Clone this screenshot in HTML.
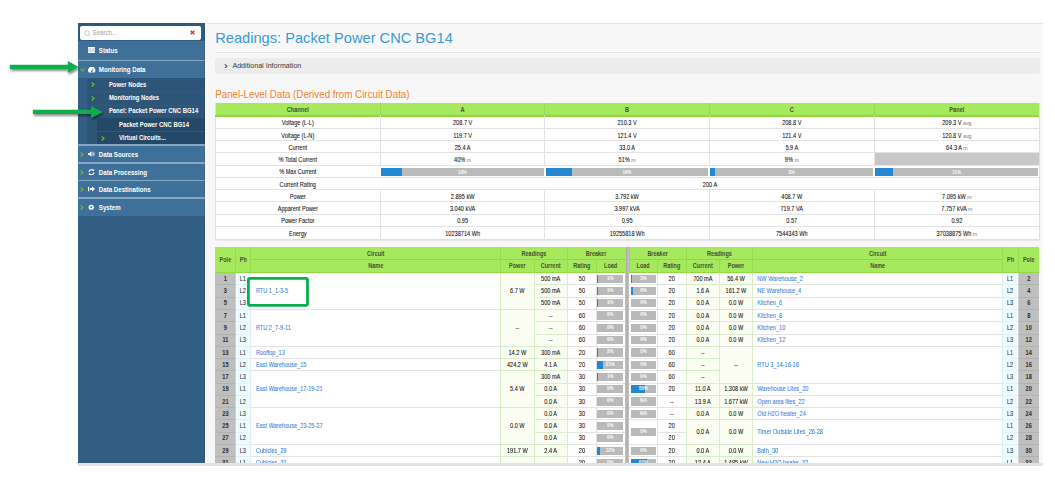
<!DOCTYPE html><html><head><meta charset="utf-8"><style>
html,body{margin:0;padding:0;width:1055px;height:485px;overflow:hidden;background:#fff;font-family:"Liberation Sans",sans-serif;}
div{box-sizing:border-box;-webkit-text-stroke:0.06px currentColor;}
#wrap{position:absolute;left:0;top:0;width:1055px;height:485px;filter:blur(0.25px);}
small{font-size:5.2px;color:#8a8a8a;}
</style></head><body><div id="wrap">
<div style="position:absolute;left:78px;top:23px;width:127px;height:440px;background:#335e83;"></div>
<div style="position:absolute;left:78px;top:23px;width:127px;height:18px;background:#2f5a7f;"></div>
<div style="position:absolute;left:80px;top:26.4px;width:121px;height:13.4px;background:#fff;border-radius:2px;"></div>
<svg style="position:absolute;left:83.5px;top:29.5px" width="7" height="7" viewBox="0 0 7 7"><circle cx="3" cy="3" r="2.3" fill="none" stroke="#aaaaaa" stroke-width="0.6"/><line x1="4.7" y1="4.7" x2="6.5" y2="6.5" stroke="#aaaaaa" stroke-width="0.7"/></svg>
<div style="position:absolute;left:92.6px;top:30.2px;font-size:6.1px;line-height:6.1px;color:#a2a2a2;font-weight:normal;white-space:nowrap;transform:scaleY(1.2);transform-origin:0 50%;-webkit-text-stroke:0;">Search...</div>
<svg style="position:absolute;left:190.3px;top:30.2px" width="5" height="5" viewBox="0 0 5 5"><path d="M0.6 0.6L4.4 4.4M4.4 0.6L0.6 4.4" stroke="#e8141a" stroke-width="1.3"/></svg>
<div style="position:absolute;left:78px;top:41px;width:127px;height:18.5px;background:#3e709a;"></div>
<div style="position:absolute;left:98.8px;top:48.25px;font-size:6.15px;line-height:6.15px;color:#fff;font-weight:bold;white-space:nowrap;transform:scaleY(1.22);transform-origin:0 50%;-webkit-text-stroke:0;">Status</div>
<svg style="position:absolute;left:88.2px;top:47.25px" width="7" height="6" viewBox="0 0 7 6"><rect x="0" y="0" width="7" height="6" fill="#fff"/><rect x="0" y="1.8" width="7" height="0.45" fill="#3e709a"/><rect x="0" y="3.8" width="7" height="0.45" fill="#3e709a"/></svg>
<div style="position:absolute;left:78px;top:59.5px;width:127px;height:1.5px;background:#86a8c4;"></div>
<div style="position:absolute;left:78px;top:61px;width:127px;height:16.900000000000006px;background:#3e709a;"></div>
<div style="position:absolute;left:98.8px;top:67.45px;font-size:6.15px;line-height:6.15px;color:#fff;font-weight:bold;white-space:nowrap;transform:scaleY(1.22);transform-origin:0 50%;-webkit-text-stroke:0;">Monitoring Data</div>
<svg style="position:absolute;left:88.2px;top:66.65px" width="7.4" height="6" viewBox="0 0 7.4 6"><path d="M0.9 5.6A3.6 3.6 0 1 1 6.5 5.6Z" fill="#fff"/><path d="M3.7 4.6L5.2 1.9" stroke="#3e709a" stroke-width="0.8"/><circle cx="3.7" cy="4.6" r="0.8" fill="#3e709a"/></svg>
<svg style="position:absolute;left:79.8px;top:67.95px" width="5" height="4" viewBox="0 0 5 4"><path d="M0.5 0.7L2.5 3L4.5 0.7" fill="none" stroke="#6cc11f" stroke-width="1.1"/></svg>
<div style="position:absolute;left:87px;top:77.9px;width:118px;height:66.1px;background:#2d5577;"></div>
<div style="position:absolute;left:87px;top:90.9px;width:118px;height:0.6px;background:#33597b;"></div>
<div style="position:absolute;left:87px;top:104.5px;width:118px;height:0.6px;background:#33597b;"></div>
<div style="position:absolute;left:108.9px;top:82.5px;font-size:5.92px;line-height:5.92px;color:#fff;font-weight:bold;white-space:nowrap;transform:scaleY(1.22);transform-origin:0 50%;-webkit-text-stroke:0;">Power Nodes</div>
<svg style="position:absolute;left:90.8px;top:82.40px" width="4" height="5" viewBox="0 0 4 5"><path d="M0.7 0.5L3 2.5L0.7 4.5" fill="none" stroke="#6cc11f" stroke-width="1.1"/></svg>
<div style="position:absolute;left:108.9px;top:95.8px;font-size:5.92px;line-height:5.92px;color:#fff;font-weight:bold;white-space:nowrap;transform:scaleY(1.22);transform-origin:0 50%;-webkit-text-stroke:0;">Monitoring Nodes</div>
<svg style="position:absolute;left:90.8px;top:95.70px" width="4" height="5" viewBox="0 0 4 5"><path d="M0.7 0.5L3 2.5L0.7 4.5" fill="none" stroke="#6cc11f" stroke-width="1.1"/></svg>
<div style="position:absolute;left:108.9px;top:109.3px;font-size:5.92px;line-height:5.92px;color:#fff;font-weight:bold;white-space:nowrap;transform:scaleY(1.22);transform-origin:0 50%;-webkit-text-stroke:0;">Panel: Packet Power CNC BG14</div>
<div style="position:absolute;left:97.2px;top:117.9px;width:107.8px;height:26.099999999999994px;background:#244868;"></div>
<div style="position:absolute;left:97.2px;top:131.2px;width:107.8px;height:0.6px;background:#34597a;"></div>
<div style="position:absolute;left:119px;top:122.64999999999999px;font-size:5.92px;line-height:5.92px;color:#fff;font-weight:bold;white-space:nowrap;transform:scaleY(1.22);transform-origin:0 50%;-webkit-text-stroke:0;">Packet Power CNC BG14</div>
<div style="position:absolute;left:119px;top:135.7px;font-size:5.92px;line-height:5.92px;color:#fff;font-weight:bold;white-space:nowrap;transform:scaleY(1.22);transform-origin:0 50%;-webkit-text-stroke:0;">Virtual Circuits...</div>
<svg style="position:absolute;left:101px;top:135.60px" width="4" height="5" viewBox="0 0 4 5"><path d="M0.7 0.5L3 2.5L0.7 4.5" fill="none" stroke="#6cc11f" stroke-width="1.1"/></svg>
<div style="position:absolute;left:78px;top:144px;width:127px;height:1.5px;background:#86a8c4;"></div>
<div style="position:absolute;left:78px;top:145.5px;width:127px;height:16.5px;background:#3e709a;"></div>
<div style="position:absolute;left:98.8px;top:151.75px;font-size:6.15px;line-height:6.15px;color:#fff;font-weight:bold;white-space:nowrap;transform:scaleY(1.22);transform-origin:0 50%;-webkit-text-stroke:0;">Data Sources</div>
<svg style="position:absolute;left:88.2px;top:150.75px" width="7" height="6" viewBox="0 0 7 6"><path d="M0 2H1.5L3.5 0.3V5.7L1.5 4H0Z" fill="#fff"/><path d="M4.5 1.5Q5.6 3 4.5 4.5M5.5 0.7Q7 3 5.5 5.3" fill="none" stroke="#fff" stroke-width="0.7"/></svg>
<svg style="position:absolute;left:80.3px;top:151.75px" width="4" height="5" viewBox="0 0 4 5"><path d="M0.7 0.5L3 2.5L0.7 4.5" fill="none" stroke="#6cc11f" stroke-width="1.1"/></svg>
<div style="position:absolute;left:78px;top:162px;width:127px;height:1.5px;background:#86a8c4;"></div>
<div style="position:absolute;left:78px;top:163.5px;width:127px;height:16.0px;background:#3e709a;"></div>
<div style="position:absolute;left:98.8px;top:169.5px;font-size:6.15px;line-height:6.15px;color:#fff;font-weight:bold;white-space:nowrap;transform:scaleY(1.22);transform-origin:0 50%;-webkit-text-stroke:0;">Data Processing</div>
<svg style="position:absolute;left:88.2px;top:168.50px" width="7" height="6.5" viewBox="0 0 7 6.5"><path d="M1 3A2.5 2.5 0 0 1 5.5 1.8M6 3.5A2.5 2.5 0 0 1 1.5 4.7" fill="none" stroke="#fff" stroke-width="1.2"/><path d="M4.2 0.3L6.3 0.5L6 2.6Z M2.8 6.2L0.7 6L1 3.9Z" fill="#fff"/></svg>
<svg style="position:absolute;left:80.3px;top:169.50px" width="4" height="5" viewBox="0 0 4 5"><path d="M0.7 0.5L3 2.5L0.7 4.5" fill="none" stroke="#6cc11f" stroke-width="1.1"/></svg>
<div style="position:absolute;left:78px;top:179.5px;width:127px;height:1.5px;background:#86a8c4;"></div>
<div style="position:absolute;left:78px;top:181px;width:127px;height:16px;background:#3e709a;"></div>
<div style="position:absolute;left:98.8px;top:187.0px;font-size:6.15px;line-height:6.15px;color:#fff;font-weight:bold;white-space:nowrap;transform:scaleY(1.22);transform-origin:0 50%;-webkit-text-stroke:0;">Data Destinations</div>
<svg style="position:absolute;left:88.2px;top:186.00px" width="7" height="6" viewBox="0 0 7 6"><path d="M0 0.8H1.2V5.2H0Z" fill="#fff"/><path d="M2 2H4V0.3L7 3L4 5.7V4H2Z" fill="#fff"/></svg>
<svg style="position:absolute;left:80.3px;top:187.00px" width="4" height="5" viewBox="0 0 4 5"><path d="M0.7 0.5L3 2.5L0.7 4.5" fill="none" stroke="#6cc11f" stroke-width="1.1"/></svg>
<div style="position:absolute;left:78px;top:197px;width:127px;height:1.5px;background:#86a8c4;"></div>
<div style="position:absolute;left:78px;top:198.5px;width:127px;height:17.30000000000001px;background:#3e709a;"></div>
<div style="position:absolute;left:98.8px;top:205.15px;font-size:6.15px;line-height:6.15px;color:#fff;font-weight:bold;white-space:nowrap;transform:scaleY(1.22);transform-origin:0 50%;-webkit-text-stroke:0;">System</div>
<svg style="position:absolute;left:88.2px;top:203.95px" width="6.5" height="6.5" viewBox="0 0 6.5 6.5"><circle cx="3.25" cy="3.25" r="2.6" fill="#fff"/><circle cx="3.25" cy="3.25" r="1.1" fill="#3e709a"/></svg>
<svg style="position:absolute;left:80.3px;top:205.15px" width="4" height="5" viewBox="0 0 4 5"><path d="M0.7 0.5L3 2.5L0.7 4.5" fill="none" stroke="#6cc11f" stroke-width="1.1"/></svg>
<div style="position:absolute;left:203.6px;top:23px;width:1.4px;height:440px;background:rgba(0,0,0,0.09);"></div>
<div style="position:absolute;left:206px;top:23px;width:836.5px;height:440px;background:#f7f7f7;"></div>
<div style="position:absolute;left:206px;top:23px;width:836.5px;height:1.3px;background:#e4e4e4;"></div>
<div style="position:absolute;left:78px;top:463px;width:965px;height:2.8px;background:#e3e3e3;"></div>
<div style="position:absolute;left:215.2px;top:31.0px;font-size:14.65px;line-height:14.65px;color:#3a9ad8;font-weight:normal;white-space:nowrap;transform:scaleY(1.06);transform-origin:0 50%;-webkit-text-stroke:0;">Readings: Packet Power CNC BG14</div>
<div style="position:absolute;left:215px;top:51.5px;width:825px;height:1px;background:#e2e2e2;"></div>
<div style="position:absolute;left:215.2px;top:57.5px;width:824.5px;height:16.7px;background:#ececec;border-radius:2px;"></div>
<svg style="position:absolute;left:224.2px;top:63.5px" width="4" height="4.5" viewBox="0 0 4 4.5"><path d="M0.8 0.4L3 2.25L0.8 4.1" fill="none" stroke="#555" stroke-width="1.1"/></svg>
<div style="position:absolute;left:232.4px;top:62.6px;font-size:7.14px;line-height:7.14px;color:#3a3a3a;font-weight:normal;white-space:nowrap;transform:scaleY(1.1);transform-origin:0 50%;-webkit-text-stroke:0;">Additional Information</div>
<div style="position:absolute;left:215.2px;top:90.0px;font-size:9.8px;line-height:9.8px;color:#ef8333;font-weight:normal;white-space:nowrap;transform:scaleY(1.08);transform-origin:0 50%;-webkit-text-stroke:0;">Panel-Level Data (Derived from Circuit Data)</div>
<div style="position:absolute;left:215.10px;top:103.20px;width:824.40px;height:135.60px;background:#fff;"></div>
<div style="position:absolute;left:215.10px;top:103.20px;width:824.40px;height:12.80px;background:#a7e95c;"></div>
<div style="position:absolute;left:215.10px;top:103.20px;width:165.40px;height:11.20px;"><div style="position:absolute;left:0px;right:0px;top:4.68px;font-size:5.65px;line-height:5.65px;color:#465036;font-weight:bold;text-align:center;white-space:nowrap;transform:scaleY(1.15);-webkit-text-stroke:0;">Channel</div></div>
<div style="position:absolute;left:380.50px;top:103.20px;width:164.30px;height:11.20px;"><div style="position:absolute;left:0px;right:0px;top:4.68px;font-size:5.65px;line-height:5.65px;color:#465036;font-weight:bold;text-align:center;white-space:nowrap;transform:scaleY(1.15);-webkit-text-stroke:0;">A</div></div>
<div style="position:absolute;left:544.80px;top:103.20px;width:164.60px;height:11.20px;"><div style="position:absolute;left:0px;right:0px;top:4.68px;font-size:5.65px;line-height:5.65px;color:#465036;font-weight:bold;text-align:center;white-space:nowrap;transform:scaleY(1.15);-webkit-text-stroke:0;">B</div></div>
<div style="position:absolute;left:709.40px;top:103.20px;width:164.80px;height:11.20px;"><div style="position:absolute;left:0px;right:0px;top:4.68px;font-size:5.65px;line-height:5.65px;color:#465036;font-weight:bold;text-align:center;white-space:nowrap;transform:scaleY(1.15);-webkit-text-stroke:0;">C</div></div>
<div style="position:absolute;left:874.20px;top:103.20px;width:165.30px;height:11.20px;"><div style="position:absolute;left:0px;right:0px;top:4.68px;font-size:5.65px;line-height:5.65px;color:#465036;font-weight:bold;text-align:center;white-space:nowrap;transform:scaleY(1.15);-webkit-text-stroke:0;">Panel</div></div>
<div style="position:absolute;left:215.10px;top:116.00px;width:165.40px;height:12.28px;"><div style="position:absolute;left:0px;right:0px;top:5.24px;font-size:5.6px;line-height:5.6px;color:#111;font-weight:normal;text-align:center;white-space:nowrap;transform:scaleY(1.15);">Voltage (L-L)</div></div>
<div style="position:absolute;left:380.50px;top:116.00px;width:164.30px;height:12.28px;"><div style="position:absolute;left:0px;right:0px;top:5.24px;font-size:5.6px;line-height:5.6px;color:#111;font-weight:normal;text-align:center;white-space:nowrap;transform:scaleY(1.15);">208.7 V</div></div>
<div style="position:absolute;left:544.80px;top:116.00px;width:164.60px;height:12.28px;"><div style="position:absolute;left:0px;right:0px;top:5.24px;font-size:5.6px;line-height:5.6px;color:#111;font-weight:normal;text-align:center;white-space:nowrap;transform:scaleY(1.15);">210.3 V</div></div>
<div style="position:absolute;left:709.40px;top:116.00px;width:164.80px;height:12.28px;"><div style="position:absolute;left:0px;right:0px;top:5.24px;font-size:5.6px;line-height:5.6px;color:#111;font-weight:normal;text-align:center;white-space:nowrap;transform:scaleY(1.15);">208.8 V</div></div>
<div style="position:absolute;left:874.20px;top:116.00px;width:165.30px;height:12.28px;"><div style="position:absolute;left:0px;right:0px;top:5.24px;font-size:5.6px;line-height:5.6px;color:#111;font-weight:normal;text-align:center;white-space:nowrap;transform:scaleY(1.15);">209.3 V <small>avg</small></div></div>
<div style="position:absolute;left:215.10px;top:128.28px;width:165.40px;height:12.28px;"><div style="position:absolute;left:0px;right:0px;top:5.24px;font-size:5.6px;line-height:5.6px;color:#111;font-weight:normal;text-align:center;white-space:nowrap;transform:scaleY(1.15);">Voltage (L-N)</div></div>
<div style="position:absolute;left:380.50px;top:128.28px;width:164.30px;height:12.28px;"><div style="position:absolute;left:0px;right:0px;top:5.24px;font-size:5.6px;line-height:5.6px;color:#111;font-weight:normal;text-align:center;white-space:nowrap;transform:scaleY(1.15);">119.7 V</div></div>
<div style="position:absolute;left:544.80px;top:128.28px;width:164.60px;height:12.28px;"><div style="position:absolute;left:0px;right:0px;top:5.24px;font-size:5.6px;line-height:5.6px;color:#111;font-weight:normal;text-align:center;white-space:nowrap;transform:scaleY(1.15);">121.4 V</div></div>
<div style="position:absolute;left:709.40px;top:128.28px;width:164.80px;height:12.28px;"><div style="position:absolute;left:0px;right:0px;top:5.24px;font-size:5.6px;line-height:5.6px;color:#111;font-weight:normal;text-align:center;white-space:nowrap;transform:scaleY(1.15);">121.4 V</div></div>
<div style="position:absolute;left:874.20px;top:128.28px;width:165.30px;height:12.28px;"><div style="position:absolute;left:0px;right:0px;top:5.24px;font-size:5.6px;line-height:5.6px;color:#111;font-weight:normal;text-align:center;white-space:nowrap;transform:scaleY(1.15);">120.8 V <small>avg</small></div></div>
<div style="position:absolute;left:215.10px;top:140.56px;width:165.40px;height:12.28px;"><div style="position:absolute;left:0px;right:0px;top:5.24px;font-size:5.6px;line-height:5.6px;color:#111;font-weight:normal;text-align:center;white-space:nowrap;transform:scaleY(1.15);">Current</div></div>
<div style="position:absolute;left:380.50px;top:140.56px;width:164.30px;height:12.28px;"><div style="position:absolute;left:0px;right:0px;top:5.24px;font-size:5.6px;line-height:5.6px;color:#111;font-weight:normal;text-align:center;white-space:nowrap;transform:scaleY(1.15);">25.4 A</div></div>
<div style="position:absolute;left:544.80px;top:140.56px;width:164.60px;height:12.28px;"><div style="position:absolute;left:0px;right:0px;top:5.24px;font-size:5.6px;line-height:5.6px;color:#111;font-weight:normal;text-align:center;white-space:nowrap;transform:scaleY(1.15);">33.0 A</div></div>
<div style="position:absolute;left:709.40px;top:140.56px;width:164.80px;height:12.28px;"><div style="position:absolute;left:0px;right:0px;top:5.24px;font-size:5.6px;line-height:5.6px;color:#111;font-weight:normal;text-align:center;white-space:nowrap;transform:scaleY(1.15);">5.9 A</div></div>
<div style="position:absolute;left:874.20px;top:140.56px;width:165.30px;height:12.28px;"><div style="position:absolute;left:0px;right:0px;top:5.24px;font-size:5.6px;line-height:5.6px;color:#111;font-weight:normal;text-align:center;white-space:nowrap;transform:scaleY(1.15);">64.3 A <small>m</small></div></div>
<div style="position:absolute;left:215.10px;top:152.84px;width:165.40px;height:12.28px;"><div style="position:absolute;left:0px;right:0px;top:5.24px;font-size:5.6px;line-height:5.6px;color:#111;font-weight:normal;text-align:center;white-space:nowrap;transform:scaleY(1.15);">% Total Current</div></div>
<div style="position:absolute;left:380.50px;top:152.84px;width:164.30px;height:12.28px;"><div style="position:absolute;left:0px;right:0px;top:5.24px;font-size:5.6px;line-height:5.6px;color:#111;font-weight:normal;text-align:center;white-space:nowrap;transform:scaleY(1.15);">40% <small>m</small></div></div>
<div style="position:absolute;left:544.80px;top:152.84px;width:164.60px;height:12.28px;"><div style="position:absolute;left:0px;right:0px;top:5.24px;font-size:5.6px;line-height:5.6px;color:#111;font-weight:normal;text-align:center;white-space:nowrap;transform:scaleY(1.15);">51% <small>m</small></div></div>
<div style="position:absolute;left:709.40px;top:152.84px;width:164.80px;height:12.28px;"><div style="position:absolute;left:0px;right:0px;top:5.24px;font-size:5.6px;line-height:5.6px;color:#111;font-weight:normal;text-align:center;white-space:nowrap;transform:scaleY(1.15);">9% <small>m</small></div></div>
<div style="position:absolute;left:874.70px;top:153.34px;width:164.80px;height:11.28px;background:#c8c8c8;"></div>
<div style="position:absolute;left:215.10px;top:165.12px;width:165.40px;height:12.28px;"><div style="position:absolute;left:0px;right:0px;top:5.24px;font-size:5.6px;line-height:5.6px;color:#111;font-weight:normal;text-align:center;white-space:nowrap;transform:scaleY(1.15);">% Max Current</div></div>
<div style="position:absolute;left:381.20px;top:167.52px;width:162.40px;height:8.18px;background:#bababa;"></div>
<div style="position:absolute;left:381.20px;top:167.52px;width:21.00px;height:8.18px;background:#2288d2;"></div>
<div style="position:absolute;left:381.20px;top:166.72px;width:162.40px;height:8.18px;"><div style="position:absolute;left:0px;right:0px;top:3.79px;font-size:4.4px;line-height:4.4px;color:#f6f6f6;font-weight:bold;text-align:center;white-space:nowrap;transform:scaleY(1.1);">12%</div></div>
<div style="position:absolute;left:545.50px;top:167.52px;width:162.70px;height:8.18px;background:#bababa;"></div>
<div style="position:absolute;left:545.50px;top:167.52px;width:26.00px;height:8.18px;background:#2288d2;"></div>
<div style="position:absolute;left:545.50px;top:166.72px;width:162.70px;height:8.18px;"><div style="position:absolute;left:0px;right:0px;top:3.79px;font-size:4.4px;line-height:4.4px;color:#f6f6f6;font-weight:bold;text-align:center;white-space:nowrap;transform:scaleY(1.1);">16%</div></div>
<div style="position:absolute;left:710.10px;top:167.52px;width:162.90px;height:8.18px;background:#bababa;"></div>
<div style="position:absolute;left:710.10px;top:167.52px;width:5.00px;height:8.18px;background:#2288d2;"></div>
<div style="position:absolute;left:710.10px;top:166.72px;width:162.90px;height:8.18px;"><div style="position:absolute;left:0px;right:0px;top:3.79px;font-size:4.4px;line-height:4.4px;color:#f6f6f6;font-weight:bold;text-align:center;white-space:nowrap;transform:scaleY(1.1);">3%</div></div>
<div style="position:absolute;left:874.90px;top:167.52px;width:163.40px;height:8.18px;background:#bababa;"></div>
<div style="position:absolute;left:874.90px;top:167.52px;width:18.00px;height:8.18px;background:#2288d2;"></div>
<div style="position:absolute;left:874.90px;top:166.72px;width:163.40px;height:8.18px;"><div style="position:absolute;left:0px;right:0px;top:3.79px;font-size:4.4px;line-height:4.4px;color:#f6f6f6;font-weight:bold;text-align:center;white-space:nowrap;transform:scaleY(1.1);">11%</div></div>
<div style="position:absolute;left:215.10px;top:177.40px;width:165.40px;height:12.28px;"><div style="position:absolute;left:0px;right:0px;top:5.24px;font-size:5.6px;line-height:5.6px;color:#111;font-weight:normal;text-align:center;white-space:nowrap;transform:scaleY(1.15);">Current Rating</div></div>
<div style="position:absolute;left:380.50px;top:177.40px;width:659.00px;height:12.28px;"><div style="position:absolute;left:0px;right:0px;top:5.24px;font-size:5.6px;line-height:5.6px;color:#111;font-weight:normal;text-align:center;white-space:nowrap;transform:scaleY(1.15);">200 A</div></div>
<div style="position:absolute;left:215.10px;top:189.68px;width:165.40px;height:12.28px;"><div style="position:absolute;left:0px;right:0px;top:5.24px;font-size:5.6px;line-height:5.6px;color:#111;font-weight:normal;text-align:center;white-space:nowrap;transform:scaleY(1.15);">Power</div></div>
<div style="position:absolute;left:380.50px;top:189.68px;width:164.30px;height:12.28px;"><div style="position:absolute;left:0px;right:0px;top:5.24px;font-size:5.6px;line-height:5.6px;color:#111;font-weight:normal;text-align:center;white-space:nowrap;transform:scaleY(1.15);">2.895 kW</div></div>
<div style="position:absolute;left:544.80px;top:189.68px;width:164.60px;height:12.28px;"><div style="position:absolute;left:0px;right:0px;top:5.24px;font-size:5.6px;line-height:5.6px;color:#111;font-weight:normal;text-align:center;white-space:nowrap;transform:scaleY(1.15);">3.792 kW</div></div>
<div style="position:absolute;left:709.40px;top:189.68px;width:164.80px;height:12.28px;"><div style="position:absolute;left:0px;right:0px;top:5.24px;font-size:5.6px;line-height:5.6px;color:#111;font-weight:normal;text-align:center;white-space:nowrap;transform:scaleY(1.15);">408.7 W</div></div>
<div style="position:absolute;left:874.20px;top:189.68px;width:165.30px;height:12.28px;"><div style="position:absolute;left:0px;right:0px;top:5.24px;font-size:5.6px;line-height:5.6px;color:#111;font-weight:normal;text-align:center;white-space:nowrap;transform:scaleY(1.15);">7.095 kW <small>m</small></div></div>
<div style="position:absolute;left:215.10px;top:201.96px;width:165.40px;height:12.28px;"><div style="position:absolute;left:0px;right:0px;top:5.24px;font-size:5.6px;line-height:5.6px;color:#111;font-weight:normal;text-align:center;white-space:nowrap;transform:scaleY(1.15);">Apparent Power</div></div>
<div style="position:absolute;left:380.50px;top:201.96px;width:164.30px;height:12.28px;"><div style="position:absolute;left:0px;right:0px;top:5.24px;font-size:5.6px;line-height:5.6px;color:#111;font-weight:normal;text-align:center;white-space:nowrap;transform:scaleY(1.15);">3.040 kVA</div></div>
<div style="position:absolute;left:544.80px;top:201.96px;width:164.60px;height:12.28px;"><div style="position:absolute;left:0px;right:0px;top:5.24px;font-size:5.6px;line-height:5.6px;color:#111;font-weight:normal;text-align:center;white-space:nowrap;transform:scaleY(1.15);">3.997 kVA</div></div>
<div style="position:absolute;left:709.40px;top:201.96px;width:164.80px;height:12.28px;"><div style="position:absolute;left:0px;right:0px;top:5.24px;font-size:5.6px;line-height:5.6px;color:#111;font-weight:normal;text-align:center;white-space:nowrap;transform:scaleY(1.15);">719.7 VA</div></div>
<div style="position:absolute;left:874.20px;top:201.96px;width:165.30px;height:12.28px;"><div style="position:absolute;left:0px;right:0px;top:5.24px;font-size:5.6px;line-height:5.6px;color:#111;font-weight:normal;text-align:center;white-space:nowrap;transform:scaleY(1.15);">7.757 kVA <small>m</small></div></div>
<div style="position:absolute;left:215.10px;top:214.24px;width:165.40px;height:12.28px;"><div style="position:absolute;left:0px;right:0px;top:5.24px;font-size:5.6px;line-height:5.6px;color:#111;font-weight:normal;text-align:center;white-space:nowrap;transform:scaleY(1.15);">Power Factor</div></div>
<div style="position:absolute;left:380.50px;top:214.24px;width:164.30px;height:12.28px;"><div style="position:absolute;left:0px;right:0px;top:5.24px;font-size:5.6px;line-height:5.6px;color:#111;font-weight:normal;text-align:center;white-space:nowrap;transform:scaleY(1.15);">0.95</div></div>
<div style="position:absolute;left:544.80px;top:214.24px;width:164.60px;height:12.28px;"><div style="position:absolute;left:0px;right:0px;top:5.24px;font-size:5.6px;line-height:5.6px;color:#111;font-weight:normal;text-align:center;white-space:nowrap;transform:scaleY(1.15);">0.95</div></div>
<div style="position:absolute;left:709.40px;top:214.24px;width:164.80px;height:12.28px;"><div style="position:absolute;left:0px;right:0px;top:5.24px;font-size:5.6px;line-height:5.6px;color:#111;font-weight:normal;text-align:center;white-space:nowrap;transform:scaleY(1.15);">0.57</div></div>
<div style="position:absolute;left:874.20px;top:214.24px;width:165.30px;height:12.28px;"><div style="position:absolute;left:0px;right:0px;top:5.24px;font-size:5.6px;line-height:5.6px;color:#111;font-weight:normal;text-align:center;white-space:nowrap;transform:scaleY(1.15);">0.92</div></div>
<div style="position:absolute;left:215.10px;top:226.52px;width:165.40px;height:12.28px;"><div style="position:absolute;left:0px;right:0px;top:5.24px;font-size:5.6px;line-height:5.6px;color:#111;font-weight:normal;text-align:center;white-space:nowrap;transform:scaleY(1.15);">Energy</div></div>
<div style="position:absolute;left:380.50px;top:226.52px;width:164.30px;height:12.28px;"><div style="position:absolute;left:0px;right:0px;top:5.24px;font-size:5.6px;line-height:5.6px;color:#111;font-weight:normal;text-align:center;white-space:nowrap;transform:scaleY(1.15);">10238714 Wh</div></div>
<div style="position:absolute;left:544.80px;top:226.52px;width:164.60px;height:12.28px;"><div style="position:absolute;left:0px;right:0px;top:5.24px;font-size:5.6px;line-height:5.6px;color:#111;font-weight:normal;text-align:center;white-space:nowrap;transform:scaleY(1.15);">19255818 Wh</div></div>
<div style="position:absolute;left:709.40px;top:226.52px;width:164.80px;height:12.28px;"><div style="position:absolute;left:0px;right:0px;top:5.24px;font-size:5.6px;line-height:5.6px;color:#111;font-weight:normal;text-align:center;white-space:nowrap;transform:scaleY(1.15);">7544343 Wh</div></div>
<div style="position:absolute;left:874.20px;top:226.52px;width:165.30px;height:12.28px;"><div style="position:absolute;left:0px;right:0px;top:5.24px;font-size:5.6px;line-height:5.6px;color:#111;font-weight:normal;text-align:center;white-space:nowrap;transform:scaleY(1.15);">37038875 Wh <small>m</small></div></div>
<div style="position:absolute;left:214.50px;top:103.20px;width:825.60px;height:136.40px;border:0.8px solid #e0e0e0;border-top:none;box-sizing:border-box;box-shadow:0 0.5px 1px rgba(0,0,0,0.06)"></div>
<div style="position:absolute;left:215.10px;top:247.30px;width:823.90px;height:215.70px;background:#fff;"></div>
<div style="position:absolute;left:215.10px;top:247.30px;width:823.90px;height:25.30px;background:#a7e95c;"></div>
<div style="position:absolute;left:215.10px;top:247.80px;width:20.60px;height:23.70px;"><div style="position:absolute;left:0px;right:0px;top:10.00px;font-size:5.5px;line-height:5.5px;color:#465036;font-weight:bold;text-align:center;white-space:nowrap;transform:scaleY(1.15);-webkit-text-stroke:0;">Pole</div></div>
<div style="position:absolute;left:235.70px;top:247.80px;width:15.20px;height:23.70px;"><div style="position:absolute;left:0px;right:0px;top:10.00px;font-size:5.5px;line-height:5.5px;color:#465036;font-weight:bold;text-align:center;white-space:nowrap;transform:scaleY(1.15);-webkit-text-stroke:0;">Ph</div></div>
<div style="position:absolute;left:250.90px;top:247.30px;width:249.70px;height:12.20px;"><div style="position:absolute;left:0px;right:0px;top:4.25px;font-size:5.5px;line-height:5.5px;color:#465036;font-weight:bold;text-align:center;white-space:nowrap;transform:scaleY(1.15);-webkit-text-stroke:0;">Circuit</div></div>
<div style="position:absolute;left:250.90px;top:260.50px;width:249.70px;height:11.50px;"><div style="position:absolute;left:0px;right:0px;top:3.90px;font-size:5.5px;line-height:5.5px;color:#465036;font-weight:bold;text-align:center;white-space:nowrap;transform:scaleY(1.15);-webkit-text-stroke:0;">Name</div></div>
<div style="position:absolute;left:500.60px;top:247.30px;width:66.70px;height:12.20px;"><div style="position:absolute;left:0px;right:0px;top:4.25px;font-size:5.5px;line-height:5.5px;color:#465036;font-weight:bold;text-align:center;white-space:nowrap;transform:scaleY(1.15);-webkit-text-stroke:0;">Readings</div></div>
<div style="position:absolute;left:500.60px;top:260.50px;width:33.50px;height:11.50px;"><div style="position:absolute;left:0px;right:0px;top:3.90px;font-size:5.5px;line-height:5.5px;color:#465036;font-weight:bold;text-align:center;white-space:nowrap;transform:scaleY(1.15);-webkit-text-stroke:0;">Power</div></div>
<div style="position:absolute;left:534.10px;top:260.50px;width:33.20px;height:11.50px;"><div style="position:absolute;left:0px;right:0px;top:3.90px;font-size:5.5px;line-height:5.5px;color:#465036;font-weight:bold;text-align:center;white-space:nowrap;transform:scaleY(1.15);-webkit-text-stroke:0;">Current</div></div>
<div style="position:absolute;left:567.30px;top:247.30px;width:57.50px;height:12.20px;"><div style="position:absolute;left:0px;right:0px;top:4.25px;font-size:5.5px;line-height:5.5px;color:#465036;font-weight:bold;text-align:center;white-space:nowrap;transform:scaleY(1.15);-webkit-text-stroke:0;">Breaker</div></div>
<div style="position:absolute;left:567.30px;top:260.50px;width:29.20px;height:11.50px;"><div style="position:absolute;left:0px;right:0px;top:3.90px;font-size:5.5px;line-height:5.5px;color:#465036;font-weight:bold;text-align:center;white-space:nowrap;transform:scaleY(1.15);-webkit-text-stroke:0;">Rating</div></div>
<div style="position:absolute;left:596.50px;top:260.50px;width:28.30px;height:11.50px;"><div style="position:absolute;left:0px;right:0px;top:3.90px;font-size:5.5px;line-height:5.5px;color:#465036;font-weight:bold;text-align:center;white-space:nowrap;transform:scaleY(1.15);-webkit-text-stroke:0;">Load</div></div>
<div style="position:absolute;left:629.00px;top:247.30px;width:57.30px;height:12.20px;"><div style="position:absolute;left:0px;right:0px;top:4.25px;font-size:5.5px;line-height:5.5px;color:#465036;font-weight:bold;text-align:center;white-space:nowrap;transform:scaleY(1.15);-webkit-text-stroke:0;">Breaker</div></div>
<div style="position:absolute;left:629.00px;top:260.50px;width:28.20px;height:11.50px;"><div style="position:absolute;left:0px;right:0px;top:3.90px;font-size:5.5px;line-height:5.5px;color:#465036;font-weight:bold;text-align:center;white-space:nowrap;transform:scaleY(1.15);-webkit-text-stroke:0;">Load</div></div>
<div style="position:absolute;left:657.20px;top:260.50px;width:29.10px;height:11.50px;"><div style="position:absolute;left:0px;right:0px;top:3.90px;font-size:5.5px;line-height:5.5px;color:#465036;font-weight:bold;text-align:center;white-space:nowrap;transform:scaleY(1.15);-webkit-text-stroke:0;">Rating</div></div>
<div style="position:absolute;left:686.30px;top:247.30px;width:66.40px;height:12.20px;"><div style="position:absolute;left:0px;right:0px;top:4.25px;font-size:5.5px;line-height:5.5px;color:#465036;font-weight:bold;text-align:center;white-space:nowrap;transform:scaleY(1.15);-webkit-text-stroke:0;">Readings</div></div>
<div style="position:absolute;left:686.30px;top:260.50px;width:33.00px;height:11.50px;"><div style="position:absolute;left:0px;right:0px;top:3.90px;font-size:5.5px;line-height:5.5px;color:#465036;font-weight:bold;text-align:center;white-space:nowrap;transform:scaleY(1.15);-webkit-text-stroke:0;">Current</div></div>
<div style="position:absolute;left:719.30px;top:260.50px;width:33.40px;height:11.50px;"><div style="position:absolute;left:0px;right:0px;top:3.90px;font-size:5.5px;line-height:5.5px;color:#465036;font-weight:bold;text-align:center;white-space:nowrap;transform:scaleY(1.15);-webkit-text-stroke:0;">Power</div></div>
<div style="position:absolute;left:752.70px;top:247.30px;width:250.00px;height:12.20px;"><div style="position:absolute;left:0px;right:0px;top:4.25px;font-size:5.5px;line-height:5.5px;color:#465036;font-weight:bold;text-align:center;white-space:nowrap;transform:scaleY(1.15);-webkit-text-stroke:0;">Circuit</div></div>
<div style="position:absolute;left:752.70px;top:260.50px;width:250.00px;height:11.50px;"><div style="position:absolute;left:0px;right:0px;top:3.90px;font-size:5.5px;line-height:5.5px;color:#465036;font-weight:bold;text-align:center;white-space:nowrap;transform:scaleY(1.15);-webkit-text-stroke:0;">Name</div></div>
<div style="position:absolute;left:1002.70px;top:247.80px;width:15.70px;height:23.70px;"><div style="position:absolute;left:0px;right:0px;top:10.00px;font-size:5.5px;line-height:5.5px;color:#465036;font-weight:bold;text-align:center;white-space:nowrap;transform:scaleY(1.15);-webkit-text-stroke:0;">Ph</div></div>
<div style="position:absolute;left:1018.40px;top:247.80px;width:20.60px;height:23.70px;"><div style="position:absolute;left:0px;right:0px;top:10.00px;font-size:5.5px;line-height:5.5px;color:#465036;font-weight:bold;text-align:center;white-space:nowrap;transform:scaleY(1.15);-webkit-text-stroke:0;">Pole</div></div>
<div style="position:absolute;left:624.80px;top:247.30px;width:4.20px;height:215.70px;background:#c2c2c2;"></div>
<div style="position:absolute;left:626.00px;top:247.30px;width:1.80px;height:215.70px;background:#b3b3b3;"></div>
<div style="position:absolute;left:215.10px;top:272.60px;width:20.60px;height:12.28px;background:#bfbfbf;"></div>
<div style="position:absolute;left:235.70px;top:272.60px;width:15.20px;height:12.28px;background:#eefbff;"></div>
<div style="position:absolute;left:1018.40px;top:272.60px;width:20.60px;height:12.28px;background:#bfbfbf;"></div>
<div style="position:absolute;left:1002.70px;top:272.60px;width:15.70px;height:12.28px;background:#eefbff;"></div>
<div style="position:absolute;left:215.10px;top:272.60px;width:20.60px;height:12.28px;"><div style="position:absolute;left:0px;right:0px;top:4.24px;font-size:5.6px;line-height:5.6px;color:#333;font-weight:bold;text-align:center;white-space:nowrap;transform:scaleY(1.15);">1</div></div>
<div style="position:absolute;left:235.70px;top:272.60px;width:15.20px;height:12.28px;"><div style="position:absolute;left:4.0px;right:4.0px;top:4.24px;font-size:5.6px;line-height:5.6px;color:#333;font-weight:normal;text-align:left;white-space:nowrap;transform:scaleY(1.15);">L1</div></div>
<div style="position:absolute;left:1018.40px;top:272.60px;width:20.60px;height:12.28px;"><div style="position:absolute;left:0px;right:0px;top:4.24px;font-size:5.6px;line-height:5.6px;color:#333;font-weight:bold;text-align:center;white-space:nowrap;transform:scaleY(1.15);">2</div></div>
<div style="position:absolute;left:1002.70px;top:272.60px;width:15.70px;height:12.28px;"><div style="position:absolute;left:4.3px;right:4.3px;top:4.24px;font-size:5.6px;line-height:5.6px;color:#333;font-weight:normal;text-align:left;white-space:nowrap;transform:scaleY(1.15);">L1</div></div>
<div style="position:absolute;left:215.10px;top:284.88px;width:20.60px;height:12.28px;background:#bfbfbf;"></div>
<div style="position:absolute;left:235.70px;top:284.88px;width:15.20px;height:12.28px;background:#eefbff;"></div>
<div style="position:absolute;left:1018.40px;top:284.88px;width:20.60px;height:12.28px;background:#bfbfbf;"></div>
<div style="position:absolute;left:1002.70px;top:284.88px;width:15.70px;height:12.28px;background:#eefbff;"></div>
<div style="position:absolute;left:215.10px;top:284.88px;width:20.60px;height:12.28px;"><div style="position:absolute;left:0px;right:0px;top:4.24px;font-size:5.6px;line-height:5.6px;color:#333;font-weight:bold;text-align:center;white-space:nowrap;transform:scaleY(1.15);">3</div></div>
<div style="position:absolute;left:235.70px;top:284.88px;width:15.20px;height:12.28px;"><div style="position:absolute;left:4.0px;right:4.0px;top:4.24px;font-size:5.6px;line-height:5.6px;color:#333;font-weight:normal;text-align:left;white-space:nowrap;transform:scaleY(1.15);">L2</div></div>
<div style="position:absolute;left:1018.40px;top:284.88px;width:20.60px;height:12.28px;"><div style="position:absolute;left:0px;right:0px;top:4.24px;font-size:5.6px;line-height:5.6px;color:#333;font-weight:bold;text-align:center;white-space:nowrap;transform:scaleY(1.15);">4</div></div>
<div style="position:absolute;left:1002.70px;top:284.88px;width:15.70px;height:12.28px;"><div style="position:absolute;left:4.3px;right:4.3px;top:4.24px;font-size:5.6px;line-height:5.6px;color:#333;font-weight:normal;text-align:left;white-space:nowrap;transform:scaleY(1.15);">L2</div></div>
<div style="position:absolute;left:215.10px;top:297.16px;width:20.60px;height:12.28px;background:#bfbfbf;"></div>
<div style="position:absolute;left:235.70px;top:297.16px;width:15.20px;height:12.28px;background:#eefbff;"></div>
<div style="position:absolute;left:1018.40px;top:297.16px;width:20.60px;height:12.28px;background:#bfbfbf;"></div>
<div style="position:absolute;left:1002.70px;top:297.16px;width:15.70px;height:12.28px;background:#eefbff;"></div>
<div style="position:absolute;left:215.10px;top:297.16px;width:20.60px;height:12.28px;"><div style="position:absolute;left:0px;right:0px;top:4.24px;font-size:5.6px;line-height:5.6px;color:#333;font-weight:bold;text-align:center;white-space:nowrap;transform:scaleY(1.15);">5</div></div>
<div style="position:absolute;left:235.70px;top:297.16px;width:15.20px;height:12.28px;"><div style="position:absolute;left:4.0px;right:4.0px;top:4.24px;font-size:5.6px;line-height:5.6px;color:#333;font-weight:normal;text-align:left;white-space:nowrap;transform:scaleY(1.15);">L3</div></div>
<div style="position:absolute;left:1018.40px;top:297.16px;width:20.60px;height:12.28px;"><div style="position:absolute;left:0px;right:0px;top:4.24px;font-size:5.6px;line-height:5.6px;color:#333;font-weight:bold;text-align:center;white-space:nowrap;transform:scaleY(1.15);">6</div></div>
<div style="position:absolute;left:1002.70px;top:297.16px;width:15.70px;height:12.28px;"><div style="position:absolute;left:4.3px;right:4.3px;top:4.24px;font-size:5.6px;line-height:5.6px;color:#333;font-weight:normal;text-align:left;white-space:nowrap;transform:scaleY(1.15);">L3</div></div>
<div style="position:absolute;left:215.10px;top:309.44px;width:20.60px;height:12.28px;background:#bfbfbf;"></div>
<div style="position:absolute;left:235.70px;top:309.44px;width:15.20px;height:12.28px;background:#eefbff;"></div>
<div style="position:absolute;left:1018.40px;top:309.44px;width:20.60px;height:12.28px;background:#bfbfbf;"></div>
<div style="position:absolute;left:1002.70px;top:309.44px;width:15.70px;height:12.28px;background:#eefbff;"></div>
<div style="position:absolute;left:215.10px;top:309.44px;width:20.60px;height:12.28px;"><div style="position:absolute;left:0px;right:0px;top:4.24px;font-size:5.6px;line-height:5.6px;color:#333;font-weight:bold;text-align:center;white-space:nowrap;transform:scaleY(1.15);">7</div></div>
<div style="position:absolute;left:235.70px;top:309.44px;width:15.20px;height:12.28px;"><div style="position:absolute;left:4.0px;right:4.0px;top:4.24px;font-size:5.6px;line-height:5.6px;color:#333;font-weight:normal;text-align:left;white-space:nowrap;transform:scaleY(1.15);">L1</div></div>
<div style="position:absolute;left:1018.40px;top:309.44px;width:20.60px;height:12.28px;"><div style="position:absolute;left:0px;right:0px;top:4.24px;font-size:5.6px;line-height:5.6px;color:#333;font-weight:bold;text-align:center;white-space:nowrap;transform:scaleY(1.15);">8</div></div>
<div style="position:absolute;left:1002.70px;top:309.44px;width:15.70px;height:12.28px;"><div style="position:absolute;left:4.3px;right:4.3px;top:4.24px;font-size:5.6px;line-height:5.6px;color:#333;font-weight:normal;text-align:left;white-space:nowrap;transform:scaleY(1.15);">L1</div></div>
<div style="position:absolute;left:215.10px;top:321.72px;width:20.60px;height:12.28px;background:#bfbfbf;"></div>
<div style="position:absolute;left:235.70px;top:321.72px;width:15.20px;height:12.28px;background:#eefbff;"></div>
<div style="position:absolute;left:1018.40px;top:321.72px;width:20.60px;height:12.28px;background:#bfbfbf;"></div>
<div style="position:absolute;left:1002.70px;top:321.72px;width:15.70px;height:12.28px;background:#eefbff;"></div>
<div style="position:absolute;left:215.10px;top:321.72px;width:20.60px;height:12.28px;"><div style="position:absolute;left:0px;right:0px;top:4.24px;font-size:5.6px;line-height:5.6px;color:#333;font-weight:bold;text-align:center;white-space:nowrap;transform:scaleY(1.15);">9</div></div>
<div style="position:absolute;left:235.70px;top:321.72px;width:15.20px;height:12.28px;"><div style="position:absolute;left:4.0px;right:4.0px;top:4.24px;font-size:5.6px;line-height:5.6px;color:#333;font-weight:normal;text-align:left;white-space:nowrap;transform:scaleY(1.15);">L2</div></div>
<div style="position:absolute;left:1018.40px;top:321.72px;width:20.60px;height:12.28px;"><div style="position:absolute;left:0px;right:0px;top:4.24px;font-size:5.6px;line-height:5.6px;color:#333;font-weight:bold;text-align:center;white-space:nowrap;transform:scaleY(1.15);">10</div></div>
<div style="position:absolute;left:1002.70px;top:321.72px;width:15.70px;height:12.28px;"><div style="position:absolute;left:4.3px;right:4.3px;top:4.24px;font-size:5.6px;line-height:5.6px;color:#333;font-weight:normal;text-align:left;white-space:nowrap;transform:scaleY(1.15);">L2</div></div>
<div style="position:absolute;left:215.10px;top:334.00px;width:20.60px;height:12.28px;background:#bfbfbf;"></div>
<div style="position:absolute;left:235.70px;top:334.00px;width:15.20px;height:12.28px;background:#eefbff;"></div>
<div style="position:absolute;left:1018.40px;top:334.00px;width:20.60px;height:12.28px;background:#bfbfbf;"></div>
<div style="position:absolute;left:1002.70px;top:334.00px;width:15.70px;height:12.28px;background:#eefbff;"></div>
<div style="position:absolute;left:215.10px;top:334.00px;width:20.60px;height:12.28px;"><div style="position:absolute;left:0px;right:0px;top:4.24px;font-size:5.6px;line-height:5.6px;color:#333;font-weight:bold;text-align:center;white-space:nowrap;transform:scaleY(1.15);">11</div></div>
<div style="position:absolute;left:235.70px;top:334.00px;width:15.20px;height:12.28px;"><div style="position:absolute;left:4.0px;right:4.0px;top:4.24px;font-size:5.6px;line-height:5.6px;color:#333;font-weight:normal;text-align:left;white-space:nowrap;transform:scaleY(1.15);">L3</div></div>
<div style="position:absolute;left:1018.40px;top:334.00px;width:20.60px;height:12.28px;"><div style="position:absolute;left:0px;right:0px;top:4.24px;font-size:5.6px;line-height:5.6px;color:#333;font-weight:bold;text-align:center;white-space:nowrap;transform:scaleY(1.15);">12</div></div>
<div style="position:absolute;left:1002.70px;top:334.00px;width:15.70px;height:12.28px;"><div style="position:absolute;left:4.3px;right:4.3px;top:4.24px;font-size:5.6px;line-height:5.6px;color:#333;font-weight:normal;text-align:left;white-space:nowrap;transform:scaleY(1.15);">L3</div></div>
<div style="position:absolute;left:215.10px;top:346.28px;width:20.60px;height:12.28px;background:#bfbfbf;"></div>
<div style="position:absolute;left:235.70px;top:346.28px;width:15.20px;height:12.28px;background:#eefbff;"></div>
<div style="position:absolute;left:1018.40px;top:346.28px;width:20.60px;height:12.28px;background:#bfbfbf;"></div>
<div style="position:absolute;left:1002.70px;top:346.28px;width:15.70px;height:12.28px;background:#eefbff;"></div>
<div style="position:absolute;left:215.10px;top:346.28px;width:20.60px;height:12.28px;"><div style="position:absolute;left:0px;right:0px;top:4.24px;font-size:5.6px;line-height:5.6px;color:#333;font-weight:bold;text-align:center;white-space:nowrap;transform:scaleY(1.15);">13</div></div>
<div style="position:absolute;left:235.70px;top:346.28px;width:15.20px;height:12.28px;"><div style="position:absolute;left:4.0px;right:4.0px;top:4.24px;font-size:5.6px;line-height:5.6px;color:#333;font-weight:normal;text-align:left;white-space:nowrap;transform:scaleY(1.15);">L1</div></div>
<div style="position:absolute;left:1018.40px;top:346.28px;width:20.60px;height:12.28px;"><div style="position:absolute;left:0px;right:0px;top:4.24px;font-size:5.6px;line-height:5.6px;color:#333;font-weight:bold;text-align:center;white-space:nowrap;transform:scaleY(1.15);">14</div></div>
<div style="position:absolute;left:1002.70px;top:346.28px;width:15.70px;height:12.28px;"><div style="position:absolute;left:4.3px;right:4.3px;top:4.24px;font-size:5.6px;line-height:5.6px;color:#333;font-weight:normal;text-align:left;white-space:nowrap;transform:scaleY(1.15);">L1</div></div>
<div style="position:absolute;left:215.10px;top:358.56px;width:20.60px;height:12.28px;background:#bfbfbf;"></div>
<div style="position:absolute;left:235.70px;top:358.56px;width:15.20px;height:12.28px;background:#eefbff;"></div>
<div style="position:absolute;left:1018.40px;top:358.56px;width:20.60px;height:12.28px;background:#bfbfbf;"></div>
<div style="position:absolute;left:1002.70px;top:358.56px;width:15.70px;height:12.28px;background:#eefbff;"></div>
<div style="position:absolute;left:215.10px;top:358.56px;width:20.60px;height:12.28px;"><div style="position:absolute;left:0px;right:0px;top:4.24px;font-size:5.6px;line-height:5.6px;color:#333;font-weight:bold;text-align:center;white-space:nowrap;transform:scaleY(1.15);">15</div></div>
<div style="position:absolute;left:235.70px;top:358.56px;width:15.20px;height:12.28px;"><div style="position:absolute;left:4.0px;right:4.0px;top:4.24px;font-size:5.6px;line-height:5.6px;color:#333;font-weight:normal;text-align:left;white-space:nowrap;transform:scaleY(1.15);">L2</div></div>
<div style="position:absolute;left:1018.40px;top:358.56px;width:20.60px;height:12.28px;"><div style="position:absolute;left:0px;right:0px;top:4.24px;font-size:5.6px;line-height:5.6px;color:#333;font-weight:bold;text-align:center;white-space:nowrap;transform:scaleY(1.15);">16</div></div>
<div style="position:absolute;left:1002.70px;top:358.56px;width:15.70px;height:12.28px;"><div style="position:absolute;left:4.3px;right:4.3px;top:4.24px;font-size:5.6px;line-height:5.6px;color:#333;font-weight:normal;text-align:left;white-space:nowrap;transform:scaleY(1.15);">L2</div></div>
<div style="position:absolute;left:215.10px;top:370.84px;width:20.60px;height:12.28px;background:#bfbfbf;"></div>
<div style="position:absolute;left:235.70px;top:370.84px;width:15.20px;height:12.28px;background:#eefbff;"></div>
<div style="position:absolute;left:1018.40px;top:370.84px;width:20.60px;height:12.28px;background:#bfbfbf;"></div>
<div style="position:absolute;left:1002.70px;top:370.84px;width:15.70px;height:12.28px;background:#eefbff;"></div>
<div style="position:absolute;left:215.10px;top:370.84px;width:20.60px;height:12.28px;"><div style="position:absolute;left:0px;right:0px;top:4.24px;font-size:5.6px;line-height:5.6px;color:#333;font-weight:bold;text-align:center;white-space:nowrap;transform:scaleY(1.15);">17</div></div>
<div style="position:absolute;left:235.70px;top:370.84px;width:15.20px;height:12.28px;"><div style="position:absolute;left:4.0px;right:4.0px;top:4.24px;font-size:5.6px;line-height:5.6px;color:#333;font-weight:normal;text-align:left;white-space:nowrap;transform:scaleY(1.15);">L3</div></div>
<div style="position:absolute;left:1018.40px;top:370.84px;width:20.60px;height:12.28px;"><div style="position:absolute;left:0px;right:0px;top:4.24px;font-size:5.6px;line-height:5.6px;color:#333;font-weight:bold;text-align:center;white-space:nowrap;transform:scaleY(1.15);">18</div></div>
<div style="position:absolute;left:1002.70px;top:370.84px;width:15.70px;height:12.28px;"><div style="position:absolute;left:4.3px;right:4.3px;top:4.24px;font-size:5.6px;line-height:5.6px;color:#333;font-weight:normal;text-align:left;white-space:nowrap;transform:scaleY(1.15);">L3</div></div>
<div style="position:absolute;left:215.10px;top:383.12px;width:20.60px;height:12.28px;background:#bfbfbf;"></div>
<div style="position:absolute;left:235.70px;top:383.12px;width:15.20px;height:12.28px;background:#eefbff;"></div>
<div style="position:absolute;left:1018.40px;top:383.12px;width:20.60px;height:12.28px;background:#bfbfbf;"></div>
<div style="position:absolute;left:1002.70px;top:383.12px;width:15.70px;height:12.28px;background:#eefbff;"></div>
<div style="position:absolute;left:215.10px;top:383.12px;width:20.60px;height:12.28px;"><div style="position:absolute;left:0px;right:0px;top:4.24px;font-size:5.6px;line-height:5.6px;color:#333;font-weight:bold;text-align:center;white-space:nowrap;transform:scaleY(1.15);">19</div></div>
<div style="position:absolute;left:235.70px;top:383.12px;width:15.20px;height:12.28px;"><div style="position:absolute;left:4.0px;right:4.0px;top:4.24px;font-size:5.6px;line-height:5.6px;color:#333;font-weight:normal;text-align:left;white-space:nowrap;transform:scaleY(1.15);">L1</div></div>
<div style="position:absolute;left:1018.40px;top:383.12px;width:20.60px;height:12.28px;"><div style="position:absolute;left:0px;right:0px;top:4.24px;font-size:5.6px;line-height:5.6px;color:#333;font-weight:bold;text-align:center;white-space:nowrap;transform:scaleY(1.15);">20</div></div>
<div style="position:absolute;left:1002.70px;top:383.12px;width:15.70px;height:12.28px;"><div style="position:absolute;left:4.3px;right:4.3px;top:4.24px;font-size:5.6px;line-height:5.6px;color:#333;font-weight:normal;text-align:left;white-space:nowrap;transform:scaleY(1.15);">L1</div></div>
<div style="position:absolute;left:215.10px;top:395.40px;width:20.60px;height:12.28px;background:#bfbfbf;"></div>
<div style="position:absolute;left:235.70px;top:395.40px;width:15.20px;height:12.28px;background:#eefbff;"></div>
<div style="position:absolute;left:1018.40px;top:395.40px;width:20.60px;height:12.28px;background:#bfbfbf;"></div>
<div style="position:absolute;left:1002.70px;top:395.40px;width:15.70px;height:12.28px;background:#eefbff;"></div>
<div style="position:absolute;left:215.10px;top:395.40px;width:20.60px;height:12.28px;"><div style="position:absolute;left:0px;right:0px;top:4.24px;font-size:5.6px;line-height:5.6px;color:#333;font-weight:bold;text-align:center;white-space:nowrap;transform:scaleY(1.15);">21</div></div>
<div style="position:absolute;left:235.70px;top:395.40px;width:15.20px;height:12.28px;"><div style="position:absolute;left:4.0px;right:4.0px;top:4.24px;font-size:5.6px;line-height:5.6px;color:#333;font-weight:normal;text-align:left;white-space:nowrap;transform:scaleY(1.15);">L2</div></div>
<div style="position:absolute;left:1018.40px;top:395.40px;width:20.60px;height:12.28px;"><div style="position:absolute;left:0px;right:0px;top:4.24px;font-size:5.6px;line-height:5.6px;color:#333;font-weight:bold;text-align:center;white-space:nowrap;transform:scaleY(1.15);">22</div></div>
<div style="position:absolute;left:1002.70px;top:395.40px;width:15.70px;height:12.28px;"><div style="position:absolute;left:4.3px;right:4.3px;top:4.24px;font-size:5.6px;line-height:5.6px;color:#333;font-weight:normal;text-align:left;white-space:nowrap;transform:scaleY(1.15);">L2</div></div>
<div style="position:absolute;left:215.10px;top:407.68px;width:20.60px;height:12.28px;background:#bfbfbf;"></div>
<div style="position:absolute;left:235.70px;top:407.68px;width:15.20px;height:12.28px;background:#eefbff;"></div>
<div style="position:absolute;left:1018.40px;top:407.68px;width:20.60px;height:12.28px;background:#bfbfbf;"></div>
<div style="position:absolute;left:1002.70px;top:407.68px;width:15.70px;height:12.28px;background:#eefbff;"></div>
<div style="position:absolute;left:215.10px;top:407.68px;width:20.60px;height:12.28px;"><div style="position:absolute;left:0px;right:0px;top:4.24px;font-size:5.6px;line-height:5.6px;color:#333;font-weight:bold;text-align:center;white-space:nowrap;transform:scaleY(1.15);">23</div></div>
<div style="position:absolute;left:235.70px;top:407.68px;width:15.20px;height:12.28px;"><div style="position:absolute;left:4.0px;right:4.0px;top:4.24px;font-size:5.6px;line-height:5.6px;color:#333;font-weight:normal;text-align:left;white-space:nowrap;transform:scaleY(1.15);">L3</div></div>
<div style="position:absolute;left:1018.40px;top:407.68px;width:20.60px;height:12.28px;"><div style="position:absolute;left:0px;right:0px;top:4.24px;font-size:5.6px;line-height:5.6px;color:#333;font-weight:bold;text-align:center;white-space:nowrap;transform:scaleY(1.15);">24</div></div>
<div style="position:absolute;left:1002.70px;top:407.68px;width:15.70px;height:12.28px;"><div style="position:absolute;left:4.3px;right:4.3px;top:4.24px;font-size:5.6px;line-height:5.6px;color:#333;font-weight:normal;text-align:left;white-space:nowrap;transform:scaleY(1.15);">L3</div></div>
<div style="position:absolute;left:215.10px;top:419.96px;width:20.60px;height:12.28px;background:#bfbfbf;"></div>
<div style="position:absolute;left:235.70px;top:419.96px;width:15.20px;height:12.28px;background:#eefbff;"></div>
<div style="position:absolute;left:1018.40px;top:419.96px;width:20.60px;height:12.28px;background:#bfbfbf;"></div>
<div style="position:absolute;left:1002.70px;top:419.96px;width:15.70px;height:12.28px;background:#eefbff;"></div>
<div style="position:absolute;left:215.10px;top:419.96px;width:20.60px;height:12.28px;"><div style="position:absolute;left:0px;right:0px;top:4.24px;font-size:5.6px;line-height:5.6px;color:#333;font-weight:bold;text-align:center;white-space:nowrap;transform:scaleY(1.15);">25</div></div>
<div style="position:absolute;left:235.70px;top:419.96px;width:15.20px;height:12.28px;"><div style="position:absolute;left:4.0px;right:4.0px;top:4.24px;font-size:5.6px;line-height:5.6px;color:#333;font-weight:normal;text-align:left;white-space:nowrap;transform:scaleY(1.15);">L1</div></div>
<div style="position:absolute;left:1018.40px;top:419.96px;width:20.60px;height:12.28px;"><div style="position:absolute;left:0px;right:0px;top:4.24px;font-size:5.6px;line-height:5.6px;color:#333;font-weight:bold;text-align:center;white-space:nowrap;transform:scaleY(1.15);">26</div></div>
<div style="position:absolute;left:1002.70px;top:419.96px;width:15.70px;height:12.28px;"><div style="position:absolute;left:4.3px;right:4.3px;top:4.24px;font-size:5.6px;line-height:5.6px;color:#333;font-weight:normal;text-align:left;white-space:nowrap;transform:scaleY(1.15);">L1</div></div>
<div style="position:absolute;left:215.10px;top:432.24px;width:20.60px;height:12.28px;background:#bfbfbf;"></div>
<div style="position:absolute;left:235.70px;top:432.24px;width:15.20px;height:12.28px;background:#eefbff;"></div>
<div style="position:absolute;left:1018.40px;top:432.24px;width:20.60px;height:12.28px;background:#bfbfbf;"></div>
<div style="position:absolute;left:1002.70px;top:432.24px;width:15.70px;height:12.28px;background:#eefbff;"></div>
<div style="position:absolute;left:215.10px;top:432.24px;width:20.60px;height:12.28px;"><div style="position:absolute;left:0px;right:0px;top:4.24px;font-size:5.6px;line-height:5.6px;color:#333;font-weight:bold;text-align:center;white-space:nowrap;transform:scaleY(1.15);">27</div></div>
<div style="position:absolute;left:235.70px;top:432.24px;width:15.20px;height:12.28px;"><div style="position:absolute;left:4.0px;right:4.0px;top:4.24px;font-size:5.6px;line-height:5.6px;color:#333;font-weight:normal;text-align:left;white-space:nowrap;transform:scaleY(1.15);">L2</div></div>
<div style="position:absolute;left:1018.40px;top:432.24px;width:20.60px;height:12.28px;"><div style="position:absolute;left:0px;right:0px;top:4.24px;font-size:5.6px;line-height:5.6px;color:#333;font-weight:bold;text-align:center;white-space:nowrap;transform:scaleY(1.15);">28</div></div>
<div style="position:absolute;left:1002.70px;top:432.24px;width:15.70px;height:12.28px;"><div style="position:absolute;left:4.3px;right:4.3px;top:4.24px;font-size:5.6px;line-height:5.6px;color:#333;font-weight:normal;text-align:left;white-space:nowrap;transform:scaleY(1.15);">L2</div></div>
<div style="position:absolute;left:215.10px;top:444.52px;width:20.60px;height:12.28px;background:#bfbfbf;"></div>
<div style="position:absolute;left:235.70px;top:444.52px;width:15.20px;height:12.28px;background:#eefbff;"></div>
<div style="position:absolute;left:1018.40px;top:444.52px;width:20.60px;height:12.28px;background:#bfbfbf;"></div>
<div style="position:absolute;left:1002.70px;top:444.52px;width:15.70px;height:12.28px;background:#eefbff;"></div>
<div style="position:absolute;left:215.10px;top:444.52px;width:20.60px;height:12.28px;"><div style="position:absolute;left:0px;right:0px;top:4.24px;font-size:5.6px;line-height:5.6px;color:#333;font-weight:bold;text-align:center;white-space:nowrap;transform:scaleY(1.15);">29</div></div>
<div style="position:absolute;left:235.70px;top:444.52px;width:15.20px;height:12.28px;"><div style="position:absolute;left:4.0px;right:4.0px;top:4.24px;font-size:5.6px;line-height:5.6px;color:#333;font-weight:normal;text-align:left;white-space:nowrap;transform:scaleY(1.15);">L3</div></div>
<div style="position:absolute;left:1018.40px;top:444.52px;width:20.60px;height:12.28px;"><div style="position:absolute;left:0px;right:0px;top:4.24px;font-size:5.6px;line-height:5.6px;color:#333;font-weight:bold;text-align:center;white-space:nowrap;transform:scaleY(1.15);">30</div></div>
<div style="position:absolute;left:1002.70px;top:444.52px;width:15.70px;height:12.28px;"><div style="position:absolute;left:4.3px;right:4.3px;top:4.24px;font-size:5.6px;line-height:5.6px;color:#333;font-weight:normal;text-align:left;white-space:nowrap;transform:scaleY(1.15);">L3</div></div>
<div style="position:absolute;left:215.10px;top:456.80px;width:20.60px;height:6.20px;background:#bfbfbf;"></div>
<div style="position:absolute;left:235.70px;top:456.80px;width:15.20px;height:6.20px;background:#eefbff;"></div>
<div style="position:absolute;left:1018.40px;top:456.80px;width:20.60px;height:6.20px;background:#bfbfbf;"></div>
<div style="position:absolute;left:1002.70px;top:456.80px;width:15.70px;height:6.20px;background:#eefbff;"></div>
<div style="position:absolute;left:215.10px;top:456.80px;width:20.60px;height:12.28px;"><div style="position:absolute;left:0px;right:0px;top:4.24px;font-size:5.6px;line-height:5.6px;color:#333;font-weight:bold;text-align:center;white-space:nowrap;transform:scaleY(1.15);">31</div></div>
<div style="position:absolute;left:235.70px;top:456.80px;width:15.20px;height:12.28px;"><div style="position:absolute;left:4.0px;right:4.0px;top:4.24px;font-size:5.6px;line-height:5.6px;color:#333;font-weight:normal;text-align:left;white-space:nowrap;transform:scaleY(1.15);">L1</div></div>
<div style="position:absolute;left:1018.40px;top:456.80px;width:20.60px;height:12.28px;"><div style="position:absolute;left:0px;right:0px;top:4.24px;font-size:5.6px;line-height:5.6px;color:#333;font-weight:bold;text-align:center;white-space:nowrap;transform:scaleY(1.15);">32</div></div>
<div style="position:absolute;left:1002.70px;top:456.80px;width:15.70px;height:12.28px;"><div style="position:absolute;left:4.3px;right:4.3px;top:4.24px;font-size:5.6px;line-height:5.6px;color:#333;font-weight:normal;text-align:left;white-space:nowrap;transform:scaleY(1.15);">L1</div></div>
<div style="position:absolute;left:250.90px;top:272.60px;width:249.70px;height:36.84px;"><div style="position:absolute;left:5px;right:5px;top:16.52px;font-size:5.6px;line-height:5.6px;color:#3482de;font-weight:normal;text-align:left;white-space:nowrap;transform:scaleY(1.15);">RTU 1_1-3-5</div></div>
<div style="position:absolute;left:500.60px;top:272.60px;width:33.50px;height:36.84px;background:#fbfdf2;"></div>
<div style="position:absolute;left:500.60px;top:272.60px;width:33.50px;height:36.84px;"><div style="position:absolute;left:0px;right:0px;top:16.52px;font-size:5.6px;line-height:5.6px;color:#111;font-weight:normal;text-align:center;white-space:nowrap;transform:scaleY(1.15);">6.7 W</div></div>
<div style="position:absolute;left:534.10px;top:272.60px;width:33.20px;height:12.28px;background:#fbfdf2;"></div>
<div style="position:absolute;left:534.10px;top:272.60px;width:33.20px;height:12.28px;"><div style="position:absolute;left:0px;right:0px;top:4.24px;font-size:5.6px;line-height:5.6px;color:#111;font-weight:normal;text-align:center;white-space:nowrap;transform:scaleY(1.15);">500 mA</div></div>
<div style="position:absolute;left:567.30px;top:272.60px;width:29.20px;height:12.28px;"><div style="position:absolute;left:0px;right:0px;top:4.24px;font-size:5.6px;line-height:5.6px;color:#111;font-weight:normal;text-align:center;white-space:nowrap;transform:scaleY(1.15);">50</div></div>
<div style="position:absolute;left:597.30px;top:274.64px;width:25.90px;height:8.20px;background:#b9b9b9;"></div>
<div style="position:absolute;left:597.30px;top:274.64px;width:0.60px;height:8.20px;background:#2188d3;"></div>
<div style="position:absolute;left:597.30px;top:273.84px;width:25.90px;height:8.20px;"><div style="position:absolute;left:0px;right:0px;top:2.80px;font-size:4.4px;line-height:4.4px;color:#f6f6f6;font-weight:bold;text-align:center;white-space:nowrap;transform:scaleY(1.1);">1%</div></div>
<div style="position:absolute;left:534.10px;top:284.88px;width:33.20px;height:12.28px;background:#fbfdf2;"></div>
<div style="position:absolute;left:534.10px;top:284.88px;width:33.20px;height:12.28px;"><div style="position:absolute;left:0px;right:0px;top:4.24px;font-size:5.6px;line-height:5.6px;color:#111;font-weight:normal;text-align:center;white-space:nowrap;transform:scaleY(1.15);">500 mA</div></div>
<div style="position:absolute;left:567.30px;top:284.88px;width:29.20px;height:12.28px;"><div style="position:absolute;left:0px;right:0px;top:4.24px;font-size:5.6px;line-height:5.6px;color:#111;font-weight:normal;text-align:center;white-space:nowrap;transform:scaleY(1.15);">50</div></div>
<div style="position:absolute;left:597.30px;top:286.92px;width:25.90px;height:8.20px;background:#b9b9b9;"></div>
<div style="position:absolute;left:597.30px;top:286.92px;width:0.60px;height:8.20px;background:#2188d3;"></div>
<div style="position:absolute;left:597.30px;top:286.12px;width:25.90px;height:8.20px;"><div style="position:absolute;left:0px;right:0px;top:2.80px;font-size:4.4px;line-height:4.4px;color:#f6f6f6;font-weight:bold;text-align:center;white-space:nowrap;transform:scaleY(1.1);">1%</div></div>
<div style="position:absolute;left:534.10px;top:297.16px;width:33.20px;height:12.28px;background:#fbfdf2;"></div>
<div style="position:absolute;left:534.10px;top:297.16px;width:33.20px;height:12.28px;"><div style="position:absolute;left:0px;right:0px;top:4.24px;font-size:5.6px;line-height:5.6px;color:#111;font-weight:normal;text-align:center;white-space:nowrap;transform:scaleY(1.15);">500 mA</div></div>
<div style="position:absolute;left:567.30px;top:297.16px;width:29.20px;height:12.28px;"><div style="position:absolute;left:0px;right:0px;top:4.24px;font-size:5.6px;line-height:5.6px;color:#111;font-weight:normal;text-align:center;white-space:nowrap;transform:scaleY(1.15);">50</div></div>
<div style="position:absolute;left:597.30px;top:299.20px;width:25.90px;height:8.20px;background:#b9b9b9;"></div>
<div style="position:absolute;left:597.30px;top:299.20px;width:0.60px;height:8.20px;background:#2188d3;"></div>
<div style="position:absolute;left:597.30px;top:298.40px;width:25.90px;height:8.20px;"><div style="position:absolute;left:0px;right:0px;top:2.80px;font-size:4.4px;line-height:4.4px;color:#f6f6f6;font-weight:bold;text-align:center;white-space:nowrap;transform:scaleY(1.1);">1%</div></div>
<div style="position:absolute;left:250.90px;top:309.44px;width:249.70px;height:36.84px;"><div style="position:absolute;left:5px;right:5px;top:16.52px;font-size:5.6px;line-height:5.6px;color:#3482de;font-weight:normal;text-align:left;white-space:nowrap;transform:scaleY(1.15);">RTU 2_7-9-11</div></div>
<div style="position:absolute;left:500.60px;top:309.44px;width:33.50px;height:36.84px;background:#fbfdf2;"></div>
<div style="position:absolute;left:500.60px;top:309.44px;width:33.50px;height:36.84px;"><div style="position:absolute;left:0px;right:0px;top:16.52px;font-size:5.6px;line-height:5.6px;color:#111;font-weight:normal;text-align:center;white-space:nowrap;transform:scaleY(1.15);">--</div></div>
<div style="position:absolute;left:534.10px;top:309.44px;width:33.20px;height:12.28px;background:#fbfdf2;"></div>
<div style="position:absolute;left:534.10px;top:309.44px;width:33.20px;height:12.28px;"><div style="position:absolute;left:0px;right:0px;top:4.24px;font-size:5.6px;line-height:5.6px;color:#111;font-weight:normal;text-align:center;white-space:nowrap;transform:scaleY(1.15);">--</div></div>
<div style="position:absolute;left:567.30px;top:309.44px;width:29.20px;height:12.28px;"><div style="position:absolute;left:0px;right:0px;top:4.24px;font-size:5.6px;line-height:5.6px;color:#111;font-weight:normal;text-align:center;white-space:nowrap;transform:scaleY(1.15);">60</div></div>
<div style="position:absolute;left:597.30px;top:311.48px;width:25.90px;height:8.20px;background:#b9b9b9;"></div>
<div style="position:absolute;left:597.30px;top:310.68px;width:25.90px;height:8.20px;"><div style="position:absolute;left:0px;right:0px;top:2.80px;font-size:4.4px;line-height:4.4px;color:#f6f6f6;font-weight:bold;text-align:center;white-space:nowrap;transform:scaleY(1.1);">0%</div></div>
<div style="position:absolute;left:534.10px;top:321.72px;width:33.20px;height:12.28px;background:#fbfdf2;"></div>
<div style="position:absolute;left:534.10px;top:321.72px;width:33.20px;height:12.28px;"><div style="position:absolute;left:0px;right:0px;top:4.24px;font-size:5.6px;line-height:5.6px;color:#111;font-weight:normal;text-align:center;white-space:nowrap;transform:scaleY(1.15);">--</div></div>
<div style="position:absolute;left:567.30px;top:321.72px;width:29.20px;height:12.28px;"><div style="position:absolute;left:0px;right:0px;top:4.24px;font-size:5.6px;line-height:5.6px;color:#111;font-weight:normal;text-align:center;white-space:nowrap;transform:scaleY(1.15);">60</div></div>
<div style="position:absolute;left:597.30px;top:323.76px;width:25.90px;height:8.20px;background:#b9b9b9;"></div>
<div style="position:absolute;left:597.30px;top:322.96px;width:25.90px;height:8.20px;"><div style="position:absolute;left:0px;right:0px;top:2.80px;font-size:4.4px;line-height:4.4px;color:#f6f6f6;font-weight:bold;text-align:center;white-space:nowrap;transform:scaleY(1.1);">0%</div></div>
<div style="position:absolute;left:534.10px;top:334.00px;width:33.20px;height:12.28px;background:#fbfdf2;"></div>
<div style="position:absolute;left:534.10px;top:334.00px;width:33.20px;height:12.28px;"><div style="position:absolute;left:0px;right:0px;top:4.24px;font-size:5.6px;line-height:5.6px;color:#111;font-weight:normal;text-align:center;white-space:nowrap;transform:scaleY(1.15);">--</div></div>
<div style="position:absolute;left:567.30px;top:334.00px;width:29.20px;height:12.28px;"><div style="position:absolute;left:0px;right:0px;top:4.24px;font-size:5.6px;line-height:5.6px;color:#111;font-weight:normal;text-align:center;white-space:nowrap;transform:scaleY(1.15);">60</div></div>
<div style="position:absolute;left:597.30px;top:336.04px;width:25.90px;height:8.20px;background:#b9b9b9;"></div>
<div style="position:absolute;left:597.30px;top:335.24px;width:25.90px;height:8.20px;"><div style="position:absolute;left:0px;right:0px;top:2.80px;font-size:4.4px;line-height:4.4px;color:#f6f6f6;font-weight:bold;text-align:center;white-space:nowrap;transform:scaleY(1.1);">0%</div></div>
<div style="position:absolute;left:250.90px;top:346.28px;width:249.70px;height:12.28px;"><div style="position:absolute;left:5px;right:5px;top:4.24px;font-size:5.6px;line-height:5.6px;color:#3482de;font-weight:normal;text-align:left;white-space:nowrap;transform:scaleY(1.15);">Rooftop_13</div></div>
<div style="position:absolute;left:500.60px;top:346.28px;width:33.50px;height:12.28px;background:#fbfdf2;"></div>
<div style="position:absolute;left:500.60px;top:346.28px;width:33.50px;height:12.28px;"><div style="position:absolute;left:0px;right:0px;top:4.24px;font-size:5.6px;line-height:5.6px;color:#111;font-weight:normal;text-align:center;white-space:nowrap;transform:scaleY(1.15);">14.2 W</div></div>
<div style="position:absolute;left:534.10px;top:346.28px;width:33.20px;height:12.28px;background:#fbfdf2;"></div>
<div style="position:absolute;left:534.10px;top:346.28px;width:33.20px;height:12.28px;"><div style="position:absolute;left:0px;right:0px;top:4.24px;font-size:5.6px;line-height:5.6px;color:#111;font-weight:normal;text-align:center;white-space:nowrap;transform:scaleY(1.15);">300 mA</div></div>
<div style="position:absolute;left:567.30px;top:346.28px;width:29.20px;height:12.28px;"><div style="position:absolute;left:0px;right:0px;top:4.24px;font-size:5.6px;line-height:5.6px;color:#111;font-weight:normal;text-align:center;white-space:nowrap;transform:scaleY(1.15);">20</div></div>
<div style="position:absolute;left:597.30px;top:348.32px;width:25.90px;height:8.20px;background:#b9b9b9;"></div>
<div style="position:absolute;left:597.30px;top:348.32px;width:0.60px;height:8.20px;background:#2188d3;"></div>
<div style="position:absolute;left:597.30px;top:347.52px;width:25.90px;height:8.20px;"><div style="position:absolute;left:0px;right:0px;top:2.80px;font-size:4.4px;line-height:4.4px;color:#f6f6f6;font-weight:bold;text-align:center;white-space:nowrap;transform:scaleY(1.1);">2%</div></div>
<div style="position:absolute;left:250.90px;top:358.56px;width:249.70px;height:12.28px;"><div style="position:absolute;left:5px;right:5px;top:4.24px;font-size:5.6px;line-height:5.6px;color:#3482de;font-weight:normal;text-align:left;white-space:nowrap;transform:scaleY(1.15);">East Warehouse_15</div></div>
<div style="position:absolute;left:500.60px;top:358.56px;width:33.50px;height:12.28px;background:#fbfdf2;"></div>
<div style="position:absolute;left:500.60px;top:358.56px;width:33.50px;height:12.28px;"><div style="position:absolute;left:0px;right:0px;top:4.24px;font-size:5.6px;line-height:5.6px;color:#111;font-weight:normal;text-align:center;white-space:nowrap;transform:scaleY(1.15);">424.2 W</div></div>
<div style="position:absolute;left:534.10px;top:358.56px;width:33.20px;height:12.28px;background:#fbfdf2;"></div>
<div style="position:absolute;left:534.10px;top:358.56px;width:33.20px;height:12.28px;"><div style="position:absolute;left:0px;right:0px;top:4.24px;font-size:5.6px;line-height:5.6px;color:#111;font-weight:normal;text-align:center;white-space:nowrap;transform:scaleY(1.15);">4.1 A</div></div>
<div style="position:absolute;left:567.30px;top:358.56px;width:29.20px;height:12.28px;"><div style="position:absolute;left:0px;right:0px;top:4.24px;font-size:5.6px;line-height:5.6px;color:#111;font-weight:normal;text-align:center;white-space:nowrap;transform:scaleY(1.15);">20</div></div>
<div style="position:absolute;left:597.30px;top:360.60px;width:25.90px;height:8.20px;background:#b9b9b9;"></div>
<div style="position:absolute;left:597.30px;top:360.60px;width:5.50px;height:8.20px;background:#2188d3;"></div>
<div style="position:absolute;left:597.30px;top:359.80px;width:25.90px;height:8.20px;"><div style="position:absolute;left:0px;right:0px;top:2.80px;font-size:4.4px;line-height:4.4px;color:#f6f6f6;font-weight:bold;text-align:center;white-space:nowrap;transform:scaleY(1.1);">21%</div></div>
<div style="position:absolute;left:250.90px;top:370.84px;width:249.70px;height:36.84px;"><div style="position:absolute;left:5px;right:5px;top:16.52px;font-size:5.6px;line-height:5.6px;color:#3482de;font-weight:normal;text-align:left;white-space:nowrap;transform:scaleY(1.15);">East Warehouse_17-19-21</div></div>
<div style="position:absolute;left:500.60px;top:370.84px;width:33.50px;height:36.84px;background:#fbfdf2;"></div>
<div style="position:absolute;left:500.60px;top:370.84px;width:33.50px;height:36.84px;"><div style="position:absolute;left:0px;right:0px;top:16.52px;font-size:5.6px;line-height:5.6px;color:#111;font-weight:normal;text-align:center;white-space:nowrap;transform:scaleY(1.15);">5.4 W</div></div>
<div style="position:absolute;left:534.10px;top:370.84px;width:33.20px;height:12.28px;background:#fbfdf2;"></div>
<div style="position:absolute;left:534.10px;top:370.84px;width:33.20px;height:12.28px;"><div style="position:absolute;left:0px;right:0px;top:4.24px;font-size:5.6px;line-height:5.6px;color:#111;font-weight:normal;text-align:center;white-space:nowrap;transform:scaleY(1.15);">300 mA</div></div>
<div style="position:absolute;left:567.30px;top:370.84px;width:29.20px;height:12.28px;"><div style="position:absolute;left:0px;right:0px;top:4.24px;font-size:5.6px;line-height:5.6px;color:#111;font-weight:normal;text-align:center;white-space:nowrap;transform:scaleY(1.15);">30</div></div>
<div style="position:absolute;left:597.30px;top:372.88px;width:25.90px;height:8.20px;background:#b9b9b9;"></div>
<div style="position:absolute;left:597.30px;top:372.88px;width:0.60px;height:8.20px;background:#2188d3;"></div>
<div style="position:absolute;left:597.30px;top:372.08px;width:25.90px;height:8.20px;"><div style="position:absolute;left:0px;right:0px;top:2.80px;font-size:4.4px;line-height:4.4px;color:#f6f6f6;font-weight:bold;text-align:center;white-space:nowrap;transform:scaleY(1.1);">1%</div></div>
<div style="position:absolute;left:534.10px;top:383.12px;width:33.20px;height:12.28px;background:#fbfdf2;"></div>
<div style="position:absolute;left:534.10px;top:383.12px;width:33.20px;height:12.28px;"><div style="position:absolute;left:0px;right:0px;top:4.24px;font-size:5.6px;line-height:5.6px;color:#111;font-weight:normal;text-align:center;white-space:nowrap;transform:scaleY(1.15);">0.0 A</div></div>
<div style="position:absolute;left:567.30px;top:383.12px;width:29.20px;height:12.28px;"><div style="position:absolute;left:0px;right:0px;top:4.24px;font-size:5.6px;line-height:5.6px;color:#111;font-weight:normal;text-align:center;white-space:nowrap;transform:scaleY(1.15);">30</div></div>
<div style="position:absolute;left:597.30px;top:385.16px;width:25.90px;height:8.20px;background:#b9b9b9;"></div>
<div style="position:absolute;left:597.30px;top:384.36px;width:25.90px;height:8.20px;"><div style="position:absolute;left:0px;right:0px;top:2.80px;font-size:4.4px;line-height:4.4px;color:#f6f6f6;font-weight:bold;text-align:center;white-space:nowrap;transform:scaleY(1.1);">0%</div></div>
<div style="position:absolute;left:534.10px;top:395.40px;width:33.20px;height:12.28px;background:#fbfdf2;"></div>
<div style="position:absolute;left:534.10px;top:395.40px;width:33.20px;height:12.28px;"><div style="position:absolute;left:0px;right:0px;top:4.24px;font-size:5.6px;line-height:5.6px;color:#111;font-weight:normal;text-align:center;white-space:nowrap;transform:scaleY(1.15);">0.0 A</div></div>
<div style="position:absolute;left:567.30px;top:395.40px;width:29.20px;height:12.28px;"><div style="position:absolute;left:0px;right:0px;top:4.24px;font-size:5.6px;line-height:5.6px;color:#111;font-weight:normal;text-align:center;white-space:nowrap;transform:scaleY(1.15);">30</div></div>
<div style="position:absolute;left:597.30px;top:397.44px;width:25.90px;height:8.20px;background:#b9b9b9;"></div>
<div style="position:absolute;left:597.30px;top:396.64px;width:25.90px;height:8.20px;"><div style="position:absolute;left:0px;right:0px;top:2.80px;font-size:4.4px;line-height:4.4px;color:#f6f6f6;font-weight:bold;text-align:center;white-space:nowrap;transform:scaleY(1.1);">0%</div></div>
<div style="position:absolute;left:250.90px;top:407.68px;width:249.70px;height:36.84px;"><div style="position:absolute;left:5px;right:5px;top:16.52px;font-size:5.6px;line-height:5.6px;color:#3482de;font-weight:normal;text-align:left;white-space:nowrap;transform:scaleY(1.15);">East Warehouse_23-25-27</div></div>
<div style="position:absolute;left:500.60px;top:407.68px;width:33.50px;height:36.84px;background:#fbfdf2;"></div>
<div style="position:absolute;left:500.60px;top:407.68px;width:33.50px;height:36.84px;"><div style="position:absolute;left:0px;right:0px;top:16.52px;font-size:5.6px;line-height:5.6px;color:#111;font-weight:normal;text-align:center;white-space:nowrap;transform:scaleY(1.15);">0.0 W</div></div>
<div style="position:absolute;left:534.10px;top:407.68px;width:33.20px;height:12.28px;background:#fbfdf2;"></div>
<div style="position:absolute;left:534.10px;top:407.68px;width:33.20px;height:12.28px;"><div style="position:absolute;left:0px;right:0px;top:4.24px;font-size:5.6px;line-height:5.6px;color:#111;font-weight:normal;text-align:center;white-space:nowrap;transform:scaleY(1.15);">0.0 A</div></div>
<div style="position:absolute;left:567.30px;top:407.68px;width:29.20px;height:12.28px;"><div style="position:absolute;left:0px;right:0px;top:4.24px;font-size:5.6px;line-height:5.6px;color:#111;font-weight:normal;text-align:center;white-space:nowrap;transform:scaleY(1.15);">30</div></div>
<div style="position:absolute;left:597.30px;top:409.72px;width:25.90px;height:8.20px;background:#b9b9b9;"></div>
<div style="position:absolute;left:597.30px;top:408.92px;width:25.90px;height:8.20px;"><div style="position:absolute;left:0px;right:0px;top:2.80px;font-size:4.4px;line-height:4.4px;color:#f6f6f6;font-weight:bold;text-align:center;white-space:nowrap;transform:scaleY(1.1);">0%</div></div>
<div style="position:absolute;left:534.10px;top:419.96px;width:33.20px;height:12.28px;background:#fbfdf2;"></div>
<div style="position:absolute;left:534.10px;top:419.96px;width:33.20px;height:12.28px;"><div style="position:absolute;left:0px;right:0px;top:4.24px;font-size:5.6px;line-height:5.6px;color:#111;font-weight:normal;text-align:center;white-space:nowrap;transform:scaleY(1.15);">0.0 A</div></div>
<div style="position:absolute;left:567.30px;top:419.96px;width:29.20px;height:12.28px;"><div style="position:absolute;left:0px;right:0px;top:4.24px;font-size:5.6px;line-height:5.6px;color:#111;font-weight:normal;text-align:center;white-space:nowrap;transform:scaleY(1.15);">30</div></div>
<div style="position:absolute;left:597.30px;top:422.00px;width:25.90px;height:8.20px;background:#b9b9b9;"></div>
<div style="position:absolute;left:597.30px;top:421.20px;width:25.90px;height:8.20px;"><div style="position:absolute;left:0px;right:0px;top:2.80px;font-size:4.4px;line-height:4.4px;color:#f6f6f6;font-weight:bold;text-align:center;white-space:nowrap;transform:scaleY(1.1);">0%</div></div>
<div style="position:absolute;left:534.10px;top:432.24px;width:33.20px;height:12.28px;background:#fbfdf2;"></div>
<div style="position:absolute;left:534.10px;top:432.24px;width:33.20px;height:12.28px;"><div style="position:absolute;left:0px;right:0px;top:4.24px;font-size:5.6px;line-height:5.6px;color:#111;font-weight:normal;text-align:center;white-space:nowrap;transform:scaleY(1.15);">0.0 A</div></div>
<div style="position:absolute;left:567.30px;top:432.24px;width:29.20px;height:12.28px;"><div style="position:absolute;left:0px;right:0px;top:4.24px;font-size:5.6px;line-height:5.6px;color:#111;font-weight:normal;text-align:center;white-space:nowrap;transform:scaleY(1.15);">30</div></div>
<div style="position:absolute;left:597.30px;top:434.28px;width:25.90px;height:8.20px;background:#b9b9b9;"></div>
<div style="position:absolute;left:597.30px;top:433.48px;width:25.90px;height:8.20px;"><div style="position:absolute;left:0px;right:0px;top:2.80px;font-size:4.4px;line-height:4.4px;color:#f6f6f6;font-weight:bold;text-align:center;white-space:nowrap;transform:scaleY(1.1);">0%</div></div>
<div style="position:absolute;left:250.90px;top:444.52px;width:249.70px;height:12.28px;"><div style="position:absolute;left:5px;right:5px;top:4.24px;font-size:5.6px;line-height:5.6px;color:#3482de;font-weight:normal;text-align:left;white-space:nowrap;transform:scaleY(1.15);">Cubicles_29</div></div>
<div style="position:absolute;left:500.60px;top:444.52px;width:33.50px;height:12.28px;background:#fbfdf2;"></div>
<div style="position:absolute;left:500.60px;top:444.52px;width:33.50px;height:12.28px;"><div style="position:absolute;left:0px;right:0px;top:4.24px;font-size:5.6px;line-height:5.6px;color:#111;font-weight:normal;text-align:center;white-space:nowrap;transform:scaleY(1.15);">191.7 W</div></div>
<div style="position:absolute;left:534.10px;top:444.52px;width:33.20px;height:12.28px;background:#fbfdf2;"></div>
<div style="position:absolute;left:534.10px;top:444.52px;width:33.20px;height:12.28px;"><div style="position:absolute;left:0px;right:0px;top:4.24px;font-size:5.6px;line-height:5.6px;color:#111;font-weight:normal;text-align:center;white-space:nowrap;transform:scaleY(1.15);">2.4 A</div></div>
<div style="position:absolute;left:567.30px;top:444.52px;width:29.20px;height:12.28px;"><div style="position:absolute;left:0px;right:0px;top:4.24px;font-size:5.6px;line-height:5.6px;color:#111;font-weight:normal;text-align:center;white-space:nowrap;transform:scaleY(1.15);">20</div></div>
<div style="position:absolute;left:597.30px;top:446.56px;width:25.90px;height:8.20px;background:#b9b9b9;"></div>
<div style="position:absolute;left:597.30px;top:446.56px;width:3.00px;height:8.20px;background:#2188d3;"></div>
<div style="position:absolute;left:597.30px;top:445.76px;width:25.90px;height:8.20px;"><div style="position:absolute;left:0px;right:0px;top:2.80px;font-size:4.4px;line-height:4.4px;color:#f6f6f6;font-weight:bold;text-align:center;white-space:nowrap;transform:scaleY(1.1);">12%</div></div>
<div style="position:absolute;left:250.90px;top:456.80px;width:249.70px;height:12.28px;"><div style="position:absolute;left:5px;right:5px;top:4.24px;font-size:5.6px;line-height:5.6px;color:#3482de;font-weight:normal;text-align:left;white-space:nowrap;transform:scaleY(1.15);">Cubicles_31</div></div>
<div style="position:absolute;left:500.60px;top:456.80px;width:33.50px;height:12.28px;background:#fbfdf2;"></div>
<div style="position:absolute;left:534.10px;top:456.80px;width:33.20px;height:12.28px;background:#fbfdf2;"></div>
<div style="position:absolute;left:567.30px;top:456.80px;width:29.20px;height:12.28px;"><div style="position:absolute;left:0px;right:0px;top:4.24px;font-size:5.6px;line-height:5.6px;color:#111;font-weight:normal;text-align:center;white-space:nowrap;transform:scaleY(1.15);">20</div></div>
<div style="position:absolute;left:597.30px;top:458.84px;width:25.90px;height:8.20px;background:#b9b9b9;"></div>
<div style="position:absolute;left:597.30px;top:458.04px;width:25.90px;height:8.20px;"><div style="position:absolute;left:0px;right:0px;top:2.80px;font-size:4.4px;line-height:4.4px;color:#f6f6f6;font-weight:bold;text-align:center;white-space:nowrap;transform:scaleY(1.1);">0%</div></div>
<div style="position:absolute;left:631.00px;top:274.64px;width:25.00px;height:8.20px;background:#b9b9b9;"></div>
<div style="position:absolute;left:631.00px;top:274.64px;width:1.20px;height:8.20px;background:#2188d3;"></div>
<div style="position:absolute;left:631.00px;top:273.84px;width:25.00px;height:8.20px;"><div style="position:absolute;left:0px;right:0px;top:2.80px;font-size:4.4px;line-height:4.4px;color:#f6f6f6;font-weight:bold;text-align:center;white-space:nowrap;transform:scaleY(1.1);">3%</div></div>
<div style="position:absolute;left:657.20px;top:272.60px;width:29.10px;height:12.28px;"><div style="position:absolute;left:0px;right:0px;top:4.24px;font-size:5.6px;line-height:5.6px;color:#111;font-weight:normal;text-align:center;white-space:nowrap;transform:scaleY(1.15);">20</div></div>
<div style="position:absolute;left:686.30px;top:272.60px;width:33.00px;height:12.28px;background:#fbfdf2;"></div>
<div style="position:absolute;left:686.30px;top:272.60px;width:33.00px;height:12.28px;"><div style="position:absolute;left:0px;right:0px;top:4.24px;font-size:5.6px;line-height:5.6px;color:#111;font-weight:normal;text-align:center;white-space:nowrap;transform:scaleY(1.15);">700 mA</div></div>
<div style="position:absolute;left:719.30px;top:272.60px;width:33.40px;height:12.28px;background:#fbfdf2;"></div>
<div style="position:absolute;left:719.30px;top:272.60px;width:33.40px;height:12.28px;"><div style="position:absolute;left:0px;right:0px;top:4.24px;font-size:5.6px;line-height:5.6px;color:#111;font-weight:normal;text-align:center;white-space:nowrap;transform:scaleY(1.15);">56.4 W</div></div>
<div style="position:absolute;left:752.70px;top:272.60px;width:250.00px;height:12.28px;"><div style="position:absolute;left:4.6px;right:4.6px;top:4.24px;font-size:5.6px;line-height:5.6px;color:#3482de;font-weight:normal;text-align:left;white-space:nowrap;transform:scaleY(1.15);">NW Warehouse_2</div></div>
<div style="position:absolute;left:631.00px;top:286.92px;width:25.00px;height:8.20px;background:#b9b9b9;"></div>
<div style="position:absolute;left:631.00px;top:286.92px;width:2.20px;height:8.20px;background:#2188d3;"></div>
<div style="position:absolute;left:631.00px;top:286.12px;width:25.00px;height:8.20px;"><div style="position:absolute;left:0px;right:0px;top:2.80px;font-size:4.4px;line-height:4.4px;color:#f6f6f6;font-weight:bold;text-align:center;white-space:nowrap;transform:scaleY(1.1);">8%</div></div>
<div style="position:absolute;left:657.20px;top:284.88px;width:29.10px;height:12.28px;"><div style="position:absolute;left:0px;right:0px;top:4.24px;font-size:5.6px;line-height:5.6px;color:#111;font-weight:normal;text-align:center;white-space:nowrap;transform:scaleY(1.15);">20</div></div>
<div style="position:absolute;left:686.30px;top:284.88px;width:33.00px;height:12.28px;background:#fbfdf2;"></div>
<div style="position:absolute;left:686.30px;top:284.88px;width:33.00px;height:12.28px;"><div style="position:absolute;left:0px;right:0px;top:4.24px;font-size:5.6px;line-height:5.6px;color:#111;font-weight:normal;text-align:center;white-space:nowrap;transform:scaleY(1.15);">1.6 A</div></div>
<div style="position:absolute;left:719.30px;top:284.88px;width:33.40px;height:12.28px;background:#fbfdf2;"></div>
<div style="position:absolute;left:719.30px;top:284.88px;width:33.40px;height:12.28px;"><div style="position:absolute;left:0px;right:0px;top:4.24px;font-size:5.6px;line-height:5.6px;color:#111;font-weight:normal;text-align:center;white-space:nowrap;transform:scaleY(1.15);">161.2 W</div></div>
<div style="position:absolute;left:752.70px;top:284.88px;width:250.00px;height:12.28px;"><div style="position:absolute;left:4.6px;right:4.6px;top:4.24px;font-size:5.6px;line-height:5.6px;color:#3482de;font-weight:normal;text-align:left;white-space:nowrap;transform:scaleY(1.15);">NE Warehouse_4</div></div>
<div style="position:absolute;left:631.00px;top:299.20px;width:25.00px;height:8.20px;background:#b9b9b9;"></div>
<div style="position:absolute;left:631.00px;top:298.40px;width:25.00px;height:8.20px;"><div style="position:absolute;left:0px;right:0px;top:2.80px;font-size:4.4px;line-height:4.4px;color:#f6f6f6;font-weight:bold;text-align:center;white-space:nowrap;transform:scaleY(1.1);">0%</div></div>
<div style="position:absolute;left:657.20px;top:297.16px;width:29.10px;height:12.28px;"><div style="position:absolute;left:0px;right:0px;top:4.24px;font-size:5.6px;line-height:5.6px;color:#111;font-weight:normal;text-align:center;white-space:nowrap;transform:scaleY(1.15);">20</div></div>
<div style="position:absolute;left:686.30px;top:297.16px;width:33.00px;height:12.28px;background:#fbfdf2;"></div>
<div style="position:absolute;left:686.30px;top:297.16px;width:33.00px;height:12.28px;"><div style="position:absolute;left:0px;right:0px;top:4.24px;font-size:5.6px;line-height:5.6px;color:#111;font-weight:normal;text-align:center;white-space:nowrap;transform:scaleY(1.15);">0.0 A</div></div>
<div style="position:absolute;left:719.30px;top:297.16px;width:33.40px;height:12.28px;background:#fbfdf2;"></div>
<div style="position:absolute;left:719.30px;top:297.16px;width:33.40px;height:12.28px;"><div style="position:absolute;left:0px;right:0px;top:4.24px;font-size:5.6px;line-height:5.6px;color:#111;font-weight:normal;text-align:center;white-space:nowrap;transform:scaleY(1.15);">0.0 W</div></div>
<div style="position:absolute;left:752.70px;top:297.16px;width:250.00px;height:12.28px;"><div style="position:absolute;left:4.6px;right:4.6px;top:4.24px;font-size:5.6px;line-height:5.6px;color:#3482de;font-weight:normal;text-align:left;white-space:nowrap;transform:scaleY(1.15);">Kitchen_6</div></div>
<div style="position:absolute;left:631.00px;top:311.48px;width:25.00px;height:8.20px;background:#b9b9b9;"></div>
<div style="position:absolute;left:631.00px;top:310.68px;width:25.00px;height:8.20px;"><div style="position:absolute;left:0px;right:0px;top:2.80px;font-size:4.4px;line-height:4.4px;color:#f6f6f6;font-weight:bold;text-align:center;white-space:nowrap;transform:scaleY(1.1);">0%</div></div>
<div style="position:absolute;left:657.20px;top:309.44px;width:29.10px;height:12.28px;"><div style="position:absolute;left:0px;right:0px;top:4.24px;font-size:5.6px;line-height:5.6px;color:#111;font-weight:normal;text-align:center;white-space:nowrap;transform:scaleY(1.15);">20</div></div>
<div style="position:absolute;left:686.30px;top:309.44px;width:33.00px;height:12.28px;background:#fbfdf2;"></div>
<div style="position:absolute;left:686.30px;top:309.44px;width:33.00px;height:12.28px;"><div style="position:absolute;left:0px;right:0px;top:4.24px;font-size:5.6px;line-height:5.6px;color:#111;font-weight:normal;text-align:center;white-space:nowrap;transform:scaleY(1.15);">0.0 A</div></div>
<div style="position:absolute;left:719.30px;top:309.44px;width:33.40px;height:12.28px;background:#fbfdf2;"></div>
<div style="position:absolute;left:719.30px;top:309.44px;width:33.40px;height:12.28px;"><div style="position:absolute;left:0px;right:0px;top:4.24px;font-size:5.6px;line-height:5.6px;color:#111;font-weight:normal;text-align:center;white-space:nowrap;transform:scaleY(1.15);">0.0 W</div></div>
<div style="position:absolute;left:752.70px;top:309.44px;width:250.00px;height:12.28px;"><div style="position:absolute;left:4.6px;right:4.6px;top:4.24px;font-size:5.6px;line-height:5.6px;color:#3482de;font-weight:normal;text-align:left;white-space:nowrap;transform:scaleY(1.15);">Kitchen_8</div></div>
<div style="position:absolute;left:631.00px;top:323.76px;width:25.00px;height:8.20px;background:#b9b9b9;"></div>
<div style="position:absolute;left:631.00px;top:322.96px;width:25.00px;height:8.20px;"><div style="position:absolute;left:0px;right:0px;top:2.80px;font-size:4.4px;line-height:4.4px;color:#f6f6f6;font-weight:bold;text-align:center;white-space:nowrap;transform:scaleY(1.1);">0%</div></div>
<div style="position:absolute;left:657.20px;top:321.72px;width:29.10px;height:12.28px;"><div style="position:absolute;left:0px;right:0px;top:4.24px;font-size:5.6px;line-height:5.6px;color:#111;font-weight:normal;text-align:center;white-space:nowrap;transform:scaleY(1.15);">20</div></div>
<div style="position:absolute;left:686.30px;top:321.72px;width:33.00px;height:12.28px;background:#fbfdf2;"></div>
<div style="position:absolute;left:686.30px;top:321.72px;width:33.00px;height:12.28px;"><div style="position:absolute;left:0px;right:0px;top:4.24px;font-size:5.6px;line-height:5.6px;color:#111;font-weight:normal;text-align:center;white-space:nowrap;transform:scaleY(1.15);">0.0 A</div></div>
<div style="position:absolute;left:719.30px;top:321.72px;width:33.40px;height:12.28px;background:#fbfdf2;"></div>
<div style="position:absolute;left:719.30px;top:321.72px;width:33.40px;height:12.28px;"><div style="position:absolute;left:0px;right:0px;top:4.24px;font-size:5.6px;line-height:5.6px;color:#111;font-weight:normal;text-align:center;white-space:nowrap;transform:scaleY(1.15);">0.0 W</div></div>
<div style="position:absolute;left:752.70px;top:321.72px;width:250.00px;height:12.28px;"><div style="position:absolute;left:4.6px;right:4.6px;top:4.24px;font-size:5.6px;line-height:5.6px;color:#3482de;font-weight:normal;text-align:left;white-space:nowrap;transform:scaleY(1.15);">Kitchen_10</div></div>
<div style="position:absolute;left:631.00px;top:336.04px;width:25.00px;height:8.20px;background:#b9b9b9;"></div>
<div style="position:absolute;left:631.00px;top:335.24px;width:25.00px;height:8.20px;"><div style="position:absolute;left:0px;right:0px;top:2.80px;font-size:4.4px;line-height:4.4px;color:#f6f6f6;font-weight:bold;text-align:center;white-space:nowrap;transform:scaleY(1.1);">0%</div></div>
<div style="position:absolute;left:657.20px;top:334.00px;width:29.10px;height:12.28px;"><div style="position:absolute;left:0px;right:0px;top:4.24px;font-size:5.6px;line-height:5.6px;color:#111;font-weight:normal;text-align:center;white-space:nowrap;transform:scaleY(1.15);">20</div></div>
<div style="position:absolute;left:686.30px;top:334.00px;width:33.00px;height:12.28px;background:#fbfdf2;"></div>
<div style="position:absolute;left:686.30px;top:334.00px;width:33.00px;height:12.28px;"><div style="position:absolute;left:0px;right:0px;top:4.24px;font-size:5.6px;line-height:5.6px;color:#111;font-weight:normal;text-align:center;white-space:nowrap;transform:scaleY(1.15);">0.0 A</div></div>
<div style="position:absolute;left:719.30px;top:334.00px;width:33.40px;height:12.28px;background:#fbfdf2;"></div>
<div style="position:absolute;left:719.30px;top:334.00px;width:33.40px;height:12.28px;"><div style="position:absolute;left:0px;right:0px;top:4.24px;font-size:5.6px;line-height:5.6px;color:#111;font-weight:normal;text-align:center;white-space:nowrap;transform:scaleY(1.15);">0.0 W</div></div>
<div style="position:absolute;left:752.70px;top:334.00px;width:250.00px;height:12.28px;"><div style="position:absolute;left:4.6px;right:4.6px;top:4.24px;font-size:5.6px;line-height:5.6px;color:#3482de;font-weight:normal;text-align:left;white-space:nowrap;transform:scaleY(1.15);">Kitchen_12</div></div>
<div style="position:absolute;left:631.00px;top:348.32px;width:25.00px;height:8.20px;background:#b9b9b9;"></div>
<div style="position:absolute;left:631.00px;top:347.52px;width:25.00px;height:8.20px;"><div style="position:absolute;left:0px;right:0px;top:2.80px;font-size:4.4px;line-height:4.4px;color:#f6f6f6;font-weight:bold;text-align:center;white-space:nowrap;transform:scaleY(1.1);">0%</div></div>
<div style="position:absolute;left:657.20px;top:346.28px;width:29.10px;height:12.28px;"><div style="position:absolute;left:0px;right:0px;top:4.24px;font-size:5.6px;line-height:5.6px;color:#111;font-weight:normal;text-align:center;white-space:nowrap;transform:scaleY(1.15);">60</div></div>
<div style="position:absolute;left:686.30px;top:346.28px;width:33.00px;height:12.28px;background:#fbfdf2;"></div>
<div style="position:absolute;left:686.30px;top:346.28px;width:33.00px;height:12.28px;"><div style="position:absolute;left:0px;right:0px;top:4.24px;font-size:5.6px;line-height:5.6px;color:#111;font-weight:normal;text-align:center;white-space:nowrap;transform:scaleY(1.15);">--</div></div>
<div style="position:absolute;left:631.00px;top:360.60px;width:25.00px;height:8.20px;background:#b9b9b9;"></div>
<div style="position:absolute;left:631.00px;top:359.80px;width:25.00px;height:8.20px;"><div style="position:absolute;left:0px;right:0px;top:2.80px;font-size:4.4px;line-height:4.4px;color:#f6f6f6;font-weight:bold;text-align:center;white-space:nowrap;transform:scaleY(1.1);">0%</div></div>
<div style="position:absolute;left:657.20px;top:358.56px;width:29.10px;height:12.28px;"><div style="position:absolute;left:0px;right:0px;top:4.24px;font-size:5.6px;line-height:5.6px;color:#111;font-weight:normal;text-align:center;white-space:nowrap;transform:scaleY(1.15);">60</div></div>
<div style="position:absolute;left:686.30px;top:358.56px;width:33.00px;height:12.28px;background:#fbfdf2;"></div>
<div style="position:absolute;left:686.30px;top:358.56px;width:33.00px;height:12.28px;"><div style="position:absolute;left:0px;right:0px;top:4.24px;font-size:5.6px;line-height:5.6px;color:#111;font-weight:normal;text-align:center;white-space:nowrap;transform:scaleY(1.15);">--</div></div>
<div style="position:absolute;left:631.00px;top:372.88px;width:25.00px;height:8.20px;background:#b9b9b9;"></div>
<div style="position:absolute;left:631.00px;top:372.08px;width:25.00px;height:8.20px;"><div style="position:absolute;left:0px;right:0px;top:2.80px;font-size:4.4px;line-height:4.4px;color:#f6f6f6;font-weight:bold;text-align:center;white-space:nowrap;transform:scaleY(1.1);">0%</div></div>
<div style="position:absolute;left:657.20px;top:370.84px;width:29.10px;height:12.28px;"><div style="position:absolute;left:0px;right:0px;top:4.24px;font-size:5.6px;line-height:5.6px;color:#111;font-weight:normal;text-align:center;white-space:nowrap;transform:scaleY(1.15);">60</div></div>
<div style="position:absolute;left:686.30px;top:370.84px;width:33.00px;height:12.28px;background:#fbfdf2;"></div>
<div style="position:absolute;left:686.30px;top:370.84px;width:33.00px;height:12.28px;"><div style="position:absolute;left:0px;right:0px;top:4.24px;font-size:5.6px;line-height:5.6px;color:#111;font-weight:normal;text-align:center;white-space:nowrap;transform:scaleY(1.15);">--</div></div>
<div style="position:absolute;left:719.30px;top:346.28px;width:33.40px;height:36.84px;background:#fbfdf2;"></div>
<div style="position:absolute;left:719.30px;top:346.28px;width:33.40px;height:36.84px;"><div style="position:absolute;left:0px;right:0px;top:16.52px;font-size:5.6px;line-height:5.6px;color:#111;font-weight:normal;text-align:center;white-space:nowrap;transform:scaleY(1.15);">--</div></div>
<div style="position:absolute;left:752.70px;top:346.28px;width:250.00px;height:36.84px;"><div style="position:absolute;left:4.6px;right:4.6px;top:16.52px;font-size:5.6px;line-height:5.6px;color:#3482de;font-weight:normal;text-align:left;white-space:nowrap;transform:scaleY(1.15);">RTU 3_14-16-18</div></div>
<div style="position:absolute;left:631.00px;top:385.16px;width:25.00px;height:8.20px;background:#b9b9b9;"></div>
<div style="position:absolute;left:631.00px;top:385.16px;width:14.00px;height:8.20px;background:#2188d3;"></div>
<div style="position:absolute;left:631.00px;top:384.36px;width:25.00px;height:8.20px;"><div style="position:absolute;left:0px;right:0px;top:2.80px;font-size:4.4px;line-height:4.4px;color:#f6f6f6;font-weight:bold;text-align:center;white-space:nowrap;transform:scaleY(1.1);">55%</div></div>
<div style="position:absolute;left:657.20px;top:383.12px;width:29.10px;height:12.28px;"><div style="position:absolute;left:0px;right:0px;top:4.24px;font-size:5.6px;line-height:5.6px;color:#111;font-weight:normal;text-align:center;white-space:nowrap;transform:scaleY(1.15);">20</div></div>
<div style="position:absolute;left:686.30px;top:383.12px;width:33.00px;height:12.28px;background:#fbfdf2;"></div>
<div style="position:absolute;left:686.30px;top:383.12px;width:33.00px;height:12.28px;"><div style="position:absolute;left:0px;right:0px;top:4.24px;font-size:5.6px;line-height:5.6px;color:#111;font-weight:normal;text-align:center;white-space:nowrap;transform:scaleY(1.15);">11.0 A</div></div>
<div style="position:absolute;left:719.30px;top:383.12px;width:33.40px;height:12.28px;background:#fbfdf2;"></div>
<div style="position:absolute;left:719.30px;top:383.12px;width:33.40px;height:12.28px;"><div style="position:absolute;left:0px;right:0px;top:4.24px;font-size:5.6px;line-height:5.6px;color:#111;font-weight:normal;text-align:center;white-space:nowrap;transform:scaleY(1.15);">1.308 kW</div></div>
<div style="position:absolute;left:752.70px;top:383.12px;width:250.00px;height:12.28px;"><div style="position:absolute;left:4.6px;right:4.6px;top:4.24px;font-size:5.6px;line-height:5.6px;color:#3482de;font-weight:normal;text-align:left;white-space:nowrap;transform:scaleY(1.15);">Warehouse Lites_20</div></div>
<div style="position:absolute;left:631.00px;top:397.44px;width:25.00px;height:8.20px;background:#b9b9b9;"></div>
<div style="position:absolute;left:631.00px;top:396.64px;width:25.00px;height:8.20px;"><div style="position:absolute;left:0px;right:0px;top:2.80px;font-size:4.4px;line-height:4.4px;color:#f6f6f6;font-weight:bold;text-align:center;white-space:nowrap;transform:scaleY(1.1);">N/A</div></div>
<div style="position:absolute;left:657.20px;top:395.40px;width:29.10px;height:12.28px;"><div style="position:absolute;left:0px;right:0px;top:4.24px;font-size:5.6px;line-height:5.6px;color:#111;font-weight:normal;text-align:center;white-space:nowrap;transform:scaleY(1.15);">--</div></div>
<div style="position:absolute;left:686.30px;top:395.40px;width:33.00px;height:12.28px;background:#fbfdf2;"></div>
<div style="position:absolute;left:686.30px;top:395.40px;width:33.00px;height:12.28px;"><div style="position:absolute;left:0px;right:0px;top:4.24px;font-size:5.6px;line-height:5.6px;color:#111;font-weight:normal;text-align:center;white-space:nowrap;transform:scaleY(1.15);">13.9 A</div></div>
<div style="position:absolute;left:719.30px;top:395.40px;width:33.40px;height:12.28px;background:#fbfdf2;"></div>
<div style="position:absolute;left:719.30px;top:395.40px;width:33.40px;height:12.28px;"><div style="position:absolute;left:0px;right:0px;top:4.24px;font-size:5.6px;line-height:5.6px;color:#111;font-weight:normal;text-align:center;white-space:nowrap;transform:scaleY(1.15);">1.677 kW</div></div>
<div style="position:absolute;left:752.70px;top:395.40px;width:250.00px;height:12.28px;"><div style="position:absolute;left:4.6px;right:4.6px;top:4.24px;font-size:5.6px;line-height:5.6px;color:#3482de;font-weight:normal;text-align:left;white-space:nowrap;transform:scaleY(1.15);">Open area lites_22</div></div>
<div style="position:absolute;left:631.00px;top:409.72px;width:25.00px;height:8.20px;background:#b9b9b9;"></div>
<div style="position:absolute;left:631.00px;top:408.92px;width:25.00px;height:8.20px;"><div style="position:absolute;left:0px;right:0px;top:2.80px;font-size:4.4px;line-height:4.4px;color:#f6f6f6;font-weight:bold;text-align:center;white-space:nowrap;transform:scaleY(1.1);">N/A</div></div>
<div style="position:absolute;left:657.20px;top:407.68px;width:29.10px;height:12.28px;"><div style="position:absolute;left:0px;right:0px;top:4.24px;font-size:5.6px;line-height:5.6px;color:#111;font-weight:normal;text-align:center;white-space:nowrap;transform:scaleY(1.15);">--</div></div>
<div style="position:absolute;left:686.30px;top:407.68px;width:33.00px;height:12.28px;background:#fbfdf2;"></div>
<div style="position:absolute;left:686.30px;top:407.68px;width:33.00px;height:12.28px;"><div style="position:absolute;left:0px;right:0px;top:4.24px;font-size:5.6px;line-height:5.6px;color:#111;font-weight:normal;text-align:center;white-space:nowrap;transform:scaleY(1.15);">0.0 A</div></div>
<div style="position:absolute;left:719.30px;top:407.68px;width:33.40px;height:12.28px;background:#fbfdf2;"></div>
<div style="position:absolute;left:719.30px;top:407.68px;width:33.40px;height:12.28px;"><div style="position:absolute;left:0px;right:0px;top:4.24px;font-size:5.6px;line-height:5.6px;color:#111;font-weight:normal;text-align:center;white-space:nowrap;transform:scaleY(1.15);">0.0 W</div></div>
<div style="position:absolute;left:752.70px;top:407.68px;width:250.00px;height:12.28px;"><div style="position:absolute;left:4.6px;right:4.6px;top:4.24px;font-size:5.6px;line-height:5.6px;color:#3482de;font-weight:normal;text-align:left;white-space:nowrap;transform:scaleY(1.15);">Old H2O heater_24</div></div>
<div style="position:absolute;left:631.00px;top:428.14px;width:25.00px;height:8.20px;background:#b9b9b9;"></div>
<div style="position:absolute;left:631.00px;top:427.34px;width:25.00px;height:8.20px;"><div style="position:absolute;left:0px;right:0px;top:2.80px;font-size:4.4px;line-height:4.4px;color:#f6f6f6;font-weight:bold;text-align:center;white-space:nowrap;transform:scaleY(1.1);">0%</div></div>
<div style="position:absolute;left:657.20px;top:419.96px;width:29.10px;height:12.28px;"><div style="position:absolute;left:0px;right:0px;top:4.24px;font-size:5.6px;line-height:5.6px;color:#111;font-weight:normal;text-align:center;white-space:nowrap;transform:scaleY(1.15);">20</div></div>
<div style="position:absolute;left:657.20px;top:432.24px;width:29.10px;height:12.28px;"><div style="position:absolute;left:0px;right:0px;top:4.24px;font-size:5.6px;line-height:5.6px;color:#111;font-weight:normal;text-align:center;white-space:nowrap;transform:scaleY(1.15);">20</div></div>
<div style="position:absolute;left:686.30px;top:419.96px;width:33.00px;height:24.56px;background:#fbfdf2;"></div>
<div style="position:absolute;left:686.30px;top:419.96px;width:33.00px;height:24.56px;"><div style="position:absolute;left:0px;right:0px;top:10.38px;font-size:5.6px;line-height:5.6px;color:#111;font-weight:normal;text-align:center;white-space:nowrap;transform:scaleY(1.15);">0.0 A</div></div>
<div style="position:absolute;left:719.30px;top:419.96px;width:33.40px;height:24.56px;background:#fbfdf2;"></div>
<div style="position:absolute;left:719.30px;top:419.96px;width:33.40px;height:24.56px;"><div style="position:absolute;left:0px;right:0px;top:10.38px;font-size:5.6px;line-height:5.6px;color:#111;font-weight:normal;text-align:center;white-space:nowrap;transform:scaleY(1.15);">0.0 W</div></div>
<div style="position:absolute;left:752.70px;top:419.96px;width:250.00px;height:24.56px;"><div style="position:absolute;left:4.6px;right:4.6px;top:10.38px;font-size:5.6px;line-height:5.6px;color:#3482de;font-weight:normal;text-align:left;white-space:nowrap;transform:scaleY(1.15);">Timer Outside Lites_26-28</div></div>
<div style="position:absolute;left:631.00px;top:446.56px;width:25.00px;height:8.20px;background:#b9b9b9;"></div>
<div style="position:absolute;left:631.00px;top:445.76px;width:25.00px;height:8.20px;"><div style="position:absolute;left:0px;right:0px;top:2.80px;font-size:4.4px;line-height:4.4px;color:#f6f6f6;font-weight:bold;text-align:center;white-space:nowrap;transform:scaleY(1.1);">0%</div></div>
<div style="position:absolute;left:657.20px;top:444.52px;width:29.10px;height:12.28px;"><div style="position:absolute;left:0px;right:0px;top:4.24px;font-size:5.6px;line-height:5.6px;color:#111;font-weight:normal;text-align:center;white-space:nowrap;transform:scaleY(1.15);">20</div></div>
<div style="position:absolute;left:686.30px;top:444.52px;width:33.00px;height:12.28px;background:#fbfdf2;"></div>
<div style="position:absolute;left:686.30px;top:444.52px;width:33.00px;height:12.28px;"><div style="position:absolute;left:0px;right:0px;top:4.24px;font-size:5.6px;line-height:5.6px;color:#111;font-weight:normal;text-align:center;white-space:nowrap;transform:scaleY(1.15);">0.0 A</div></div>
<div style="position:absolute;left:719.30px;top:444.52px;width:33.40px;height:12.28px;background:#fbfdf2;"></div>
<div style="position:absolute;left:719.30px;top:444.52px;width:33.40px;height:12.28px;"><div style="position:absolute;left:0px;right:0px;top:4.24px;font-size:5.6px;line-height:5.6px;color:#111;font-weight:normal;text-align:center;white-space:nowrap;transform:scaleY(1.15);">0.0 W</div></div>
<div style="position:absolute;left:752.70px;top:444.52px;width:250.00px;height:12.28px;"><div style="position:absolute;left:4.6px;right:4.6px;top:4.24px;font-size:5.6px;line-height:5.6px;color:#3482de;font-weight:normal;text-align:left;white-space:nowrap;transform:scaleY(1.15);">Bath_30</div></div>
<div style="position:absolute;left:631.00px;top:458.84px;width:25.00px;height:8.20px;background:#b9b9b9;"></div>
<div style="position:absolute;left:631.00px;top:458.84px;width:15.50px;height:8.20px;background:#2188d3;"></div>
<div style="position:absolute;left:631.00px;top:458.04px;width:25.00px;height:8.20px;"><div style="position:absolute;left:0px;right:0px;top:2.80px;font-size:4.4px;line-height:4.4px;color:#f6f6f6;font-weight:bold;text-align:center;white-space:nowrap;transform:scaleY(1.1);">62%</div></div>
<div style="position:absolute;left:657.20px;top:456.80px;width:29.10px;height:12.28px;"><div style="position:absolute;left:0px;right:0px;top:4.24px;font-size:5.6px;line-height:5.6px;color:#111;font-weight:normal;text-align:center;white-space:nowrap;transform:scaleY(1.15);">20</div></div>
<div style="position:absolute;left:686.30px;top:456.80px;width:33.00px;height:12.28px;background:#fbfdf2;"></div>
<div style="position:absolute;left:686.30px;top:456.80px;width:33.00px;height:12.28px;"><div style="position:absolute;left:0px;right:0px;top:4.24px;font-size:5.6px;line-height:5.6px;color:#111;font-weight:normal;text-align:center;white-space:nowrap;transform:scaleY(1.15);">12.4 A</div></div>
<div style="position:absolute;left:719.30px;top:456.80px;width:33.40px;height:12.28px;background:#fbfdf2;"></div>
<div style="position:absolute;left:719.30px;top:456.80px;width:33.40px;height:12.28px;"><div style="position:absolute;left:0px;right:0px;top:4.24px;font-size:5.6px;line-height:5.6px;color:#111;font-weight:normal;text-align:center;white-space:nowrap;transform:scaleY(1.15);">1.485 kW</div></div>
<div style="position:absolute;left:752.70px;top:456.80px;width:250.00px;height:12.28px;"><div style="position:absolute;left:4.6px;right:4.6px;top:4.24px;font-size:5.6px;line-height:5.6px;color:#3482de;font-weight:normal;text-align:left;white-space:nowrap;transform:scaleY(1.15);">New H2O heater_32</div></div>
<div style="position:absolute;left:215.10px;top:115.00px;width:824.40px;height:1.6px;background:#8fd940;"></div>
<div style="position:absolute;left:215.10px;top:127.78px;width:824.40px;height:1px;background:#e3e3e3;"></div>
<div style="position:absolute;left:215.10px;top:140.06px;width:824.40px;height:1px;background:#e3e3e3;"></div>
<div style="position:absolute;left:215.10px;top:152.34px;width:824.40px;height:1px;background:#e3e3e3;"></div>
<div style="position:absolute;left:215.10px;top:164.62px;width:824.40px;height:1px;background:#e3e3e3;"></div>
<div style="position:absolute;left:215.10px;top:176.90px;width:824.40px;height:1px;background:#e3e3e3;"></div>
<div style="position:absolute;left:215.10px;top:189.18px;width:824.40px;height:1px;background:#e3e3e3;"></div>
<div style="position:absolute;left:215.10px;top:201.46px;width:824.40px;height:1px;background:#e3e3e3;"></div>
<div style="position:absolute;left:215.10px;top:213.74px;width:824.40px;height:1px;background:#e3e3e3;"></div>
<div style="position:absolute;left:215.10px;top:226.02px;width:824.40px;height:1px;background:#e3e3e3;"></div>
<div style="position:absolute;left:380.00px;top:103.20px;width:1px;height:61.92px;background:#e3e3e3;"></div>
<div style="position:absolute;left:380.00px;top:189.68px;width:1px;height:49.12px;background:#e3e3e3;"></div>
<div style="position:absolute;left:544.30px;top:103.20px;width:1px;height:61.92px;background:#e3e3e3;"></div>
<div style="position:absolute;left:544.30px;top:189.68px;width:1px;height:49.12px;background:#e3e3e3;"></div>
<div style="position:absolute;left:708.90px;top:103.20px;width:1px;height:61.92px;background:#e3e3e3;"></div>
<div style="position:absolute;left:708.90px;top:189.68px;width:1px;height:49.12px;background:#e3e3e3;"></div>
<div style="position:absolute;left:873.70px;top:103.20px;width:1px;height:61.92px;background:#e3e3e3;"></div>
<div style="position:absolute;left:873.70px;top:189.68px;width:1px;height:49.12px;background:#e3e3e3;"></div>
<div style="position:absolute;left:380.00px;top:103.20px;width:1px;height:12.80px;background:#96dc4e;"></div>
<div style="position:absolute;left:544.30px;top:103.20px;width:1px;height:12.80px;background:#96dc4e;"></div>
<div style="position:absolute;left:708.90px;top:103.20px;width:1px;height:12.80px;background:#96dc4e;"></div>
<div style="position:absolute;left:873.70px;top:103.20px;width:1px;height:12.80px;background:#96dc4e;"></div>
<div style="position:absolute;left:215.10px;top:271.60px;width:823.90px;height:1.6px;background:#8fd940;"></div>
<div style="position:absolute;left:250.90px;top:259.00px;width:373.90px;height:0.9px;background:#8fd940;"></div>
<div style="position:absolute;left:629.00px;top:259.00px;width:373.70px;height:0.9px;background:#8fd940;"></div>
<div style="position:absolute;left:235.20px;top:247.30px;width:0.9px;height:25.30px;background:#96dc4e;"></div>
<div style="position:absolute;left:250.40px;top:247.30px;width:0.9px;height:25.30px;background:#96dc4e;"></div>
<div style="position:absolute;left:500.10px;top:247.30px;width:0.9px;height:25.30px;background:#96dc4e;"></div>
<div style="position:absolute;left:566.80px;top:247.30px;width:0.9px;height:25.30px;background:#96dc4e;"></div>
<div style="position:absolute;left:628.50px;top:247.30px;width:0.9px;height:25.30px;background:#96dc4e;"></div>
<div style="position:absolute;left:685.80px;top:247.30px;width:0.9px;height:25.30px;background:#96dc4e;"></div>
<div style="position:absolute;left:752.20px;top:247.30px;width:0.9px;height:25.30px;background:#96dc4e;"></div>
<div style="position:absolute;left:1002.20px;top:247.30px;width:0.9px;height:25.30px;background:#96dc4e;"></div>
<div style="position:absolute;left:1017.90px;top:247.30px;width:0.9px;height:25.30px;background:#96dc4e;"></div>
<div style="position:absolute;left:533.60px;top:259.50px;width:0.9px;height:13.10px;background:#96dc4e;"></div>
<div style="position:absolute;left:596.00px;top:259.50px;width:0.9px;height:13.10px;background:#96dc4e;"></div>
<div style="position:absolute;left:656.70px;top:259.50px;width:0.9px;height:13.10px;background:#96dc4e;"></div>
<div style="position:absolute;left:718.80px;top:259.50px;width:0.9px;height:13.10px;background:#96dc4e;"></div>
<div style="position:absolute;left:215.10px;top:284.38px;width:20.60px;height:1px;background:#b2b2b2;"></div>
<div style="position:absolute;left:235.70px;top:284.38px;width:15.20px;height:1px;background:#e4f2f6;"></div>
<div style="position:absolute;left:1018.40px;top:284.38px;width:20.60px;height:1px;background:#b2b2b2;"></div>
<div style="position:absolute;left:1002.70px;top:284.38px;width:15.70px;height:1px;background:#e4f2f6;"></div>
<div style="position:absolute;left:215.10px;top:296.66px;width:20.60px;height:1px;background:#b2b2b2;"></div>
<div style="position:absolute;left:235.70px;top:296.66px;width:15.20px;height:1px;background:#e4f2f6;"></div>
<div style="position:absolute;left:1018.40px;top:296.66px;width:20.60px;height:1px;background:#b2b2b2;"></div>
<div style="position:absolute;left:1002.70px;top:296.66px;width:15.70px;height:1px;background:#e4f2f6;"></div>
<div style="position:absolute;left:215.10px;top:308.94px;width:20.60px;height:1px;background:#b2b2b2;"></div>
<div style="position:absolute;left:235.70px;top:308.94px;width:15.20px;height:1px;background:#e4f2f6;"></div>
<div style="position:absolute;left:1018.40px;top:308.94px;width:20.60px;height:1px;background:#b2b2b2;"></div>
<div style="position:absolute;left:1002.70px;top:308.94px;width:15.70px;height:1px;background:#e4f2f6;"></div>
<div style="position:absolute;left:215.10px;top:321.22px;width:20.60px;height:1px;background:#b2b2b2;"></div>
<div style="position:absolute;left:235.70px;top:321.22px;width:15.20px;height:1px;background:#e4f2f6;"></div>
<div style="position:absolute;left:1018.40px;top:321.22px;width:20.60px;height:1px;background:#b2b2b2;"></div>
<div style="position:absolute;left:1002.70px;top:321.22px;width:15.70px;height:1px;background:#e4f2f6;"></div>
<div style="position:absolute;left:215.10px;top:333.50px;width:20.60px;height:1px;background:#b2b2b2;"></div>
<div style="position:absolute;left:235.70px;top:333.50px;width:15.20px;height:1px;background:#e4f2f6;"></div>
<div style="position:absolute;left:1018.40px;top:333.50px;width:20.60px;height:1px;background:#b2b2b2;"></div>
<div style="position:absolute;left:1002.70px;top:333.50px;width:15.70px;height:1px;background:#e4f2f6;"></div>
<div style="position:absolute;left:215.10px;top:345.78px;width:20.60px;height:1px;background:#b2b2b2;"></div>
<div style="position:absolute;left:235.70px;top:345.78px;width:15.20px;height:1px;background:#e4f2f6;"></div>
<div style="position:absolute;left:1018.40px;top:345.78px;width:20.60px;height:1px;background:#b2b2b2;"></div>
<div style="position:absolute;left:1002.70px;top:345.78px;width:15.70px;height:1px;background:#e4f2f6;"></div>
<div style="position:absolute;left:215.10px;top:358.06px;width:20.60px;height:1px;background:#b2b2b2;"></div>
<div style="position:absolute;left:235.70px;top:358.06px;width:15.20px;height:1px;background:#e4f2f6;"></div>
<div style="position:absolute;left:1018.40px;top:358.06px;width:20.60px;height:1px;background:#b2b2b2;"></div>
<div style="position:absolute;left:1002.70px;top:358.06px;width:15.70px;height:1px;background:#e4f2f6;"></div>
<div style="position:absolute;left:215.10px;top:370.34px;width:20.60px;height:1px;background:#b2b2b2;"></div>
<div style="position:absolute;left:235.70px;top:370.34px;width:15.20px;height:1px;background:#e4f2f6;"></div>
<div style="position:absolute;left:1018.40px;top:370.34px;width:20.60px;height:1px;background:#b2b2b2;"></div>
<div style="position:absolute;left:1002.70px;top:370.34px;width:15.70px;height:1px;background:#e4f2f6;"></div>
<div style="position:absolute;left:215.10px;top:382.62px;width:20.60px;height:1px;background:#b2b2b2;"></div>
<div style="position:absolute;left:235.70px;top:382.62px;width:15.20px;height:1px;background:#e4f2f6;"></div>
<div style="position:absolute;left:1018.40px;top:382.62px;width:20.60px;height:1px;background:#b2b2b2;"></div>
<div style="position:absolute;left:1002.70px;top:382.62px;width:15.70px;height:1px;background:#e4f2f6;"></div>
<div style="position:absolute;left:215.10px;top:394.90px;width:20.60px;height:1px;background:#b2b2b2;"></div>
<div style="position:absolute;left:235.70px;top:394.90px;width:15.20px;height:1px;background:#e4f2f6;"></div>
<div style="position:absolute;left:1018.40px;top:394.90px;width:20.60px;height:1px;background:#b2b2b2;"></div>
<div style="position:absolute;left:1002.70px;top:394.90px;width:15.70px;height:1px;background:#e4f2f6;"></div>
<div style="position:absolute;left:215.10px;top:407.18px;width:20.60px;height:1px;background:#b2b2b2;"></div>
<div style="position:absolute;left:235.70px;top:407.18px;width:15.20px;height:1px;background:#e4f2f6;"></div>
<div style="position:absolute;left:1018.40px;top:407.18px;width:20.60px;height:1px;background:#b2b2b2;"></div>
<div style="position:absolute;left:1002.70px;top:407.18px;width:15.70px;height:1px;background:#e4f2f6;"></div>
<div style="position:absolute;left:215.10px;top:419.46px;width:20.60px;height:1px;background:#b2b2b2;"></div>
<div style="position:absolute;left:235.70px;top:419.46px;width:15.20px;height:1px;background:#e4f2f6;"></div>
<div style="position:absolute;left:1018.40px;top:419.46px;width:20.60px;height:1px;background:#b2b2b2;"></div>
<div style="position:absolute;left:1002.70px;top:419.46px;width:15.70px;height:1px;background:#e4f2f6;"></div>
<div style="position:absolute;left:215.10px;top:431.74px;width:20.60px;height:1px;background:#b2b2b2;"></div>
<div style="position:absolute;left:235.70px;top:431.74px;width:15.20px;height:1px;background:#e4f2f6;"></div>
<div style="position:absolute;left:1018.40px;top:431.74px;width:20.60px;height:1px;background:#b2b2b2;"></div>
<div style="position:absolute;left:1002.70px;top:431.74px;width:15.70px;height:1px;background:#e4f2f6;"></div>
<div style="position:absolute;left:215.10px;top:444.02px;width:20.60px;height:1px;background:#b2b2b2;"></div>
<div style="position:absolute;left:235.70px;top:444.02px;width:15.20px;height:1px;background:#e4f2f6;"></div>
<div style="position:absolute;left:1018.40px;top:444.02px;width:20.60px;height:1px;background:#b2b2b2;"></div>
<div style="position:absolute;left:1002.70px;top:444.02px;width:15.70px;height:1px;background:#e4f2f6;"></div>
<div style="position:absolute;left:215.10px;top:456.30px;width:20.60px;height:1px;background:#b2b2b2;"></div>
<div style="position:absolute;left:235.70px;top:456.30px;width:15.20px;height:1px;background:#e4f2f6;"></div>
<div style="position:absolute;left:1018.40px;top:456.30px;width:20.60px;height:1px;background:#b2b2b2;"></div>
<div style="position:absolute;left:1002.70px;top:456.30px;width:15.70px;height:1px;background:#e4f2f6;"></div>
<div style="position:absolute;left:534.10px;top:284.38px;width:33.20px;height:1px;background:#d8edc8;"></div>
<div style="position:absolute;left:567.30px;top:284.38px;width:57.50px;height:1px;background:#e3e3e3;"></div>
<div style="position:absolute;left:534.10px;top:296.66px;width:33.20px;height:1px;background:#d8edc8;"></div>
<div style="position:absolute;left:567.30px;top:296.66px;width:57.50px;height:1px;background:#e3e3e3;"></div>
<div style="position:absolute;left:250.90px;top:308.94px;width:249.70px;height:1px;background:#e3e3e3;"></div>
<div style="position:absolute;left:500.60px;top:308.94px;width:33.50px;height:1px;background:#d8edc8;"></div>
<div style="position:absolute;left:534.10px;top:308.94px;width:33.20px;height:1px;background:#d8edc8;"></div>
<div style="position:absolute;left:567.30px;top:308.94px;width:57.50px;height:1px;background:#e3e3e3;"></div>
<div style="position:absolute;left:534.10px;top:321.22px;width:33.20px;height:1px;background:#d8edc8;"></div>
<div style="position:absolute;left:567.30px;top:321.22px;width:57.50px;height:1px;background:#e3e3e3;"></div>
<div style="position:absolute;left:534.10px;top:333.50px;width:33.20px;height:1px;background:#d8edc8;"></div>
<div style="position:absolute;left:567.30px;top:333.50px;width:57.50px;height:1px;background:#e3e3e3;"></div>
<div style="position:absolute;left:250.90px;top:345.78px;width:249.70px;height:1px;background:#e3e3e3;"></div>
<div style="position:absolute;left:500.60px;top:345.78px;width:33.50px;height:1px;background:#d8edc8;"></div>
<div style="position:absolute;left:534.10px;top:345.78px;width:33.20px;height:1px;background:#d8edc8;"></div>
<div style="position:absolute;left:567.30px;top:345.78px;width:57.50px;height:1px;background:#e3e3e3;"></div>
<div style="position:absolute;left:250.90px;top:358.06px;width:249.70px;height:1px;background:#e3e3e3;"></div>
<div style="position:absolute;left:500.60px;top:358.06px;width:33.50px;height:1px;background:#d8edc8;"></div>
<div style="position:absolute;left:534.10px;top:358.06px;width:33.20px;height:1px;background:#d8edc8;"></div>
<div style="position:absolute;left:567.30px;top:358.06px;width:57.50px;height:1px;background:#e3e3e3;"></div>
<div style="position:absolute;left:250.90px;top:370.34px;width:249.70px;height:1px;background:#e3e3e3;"></div>
<div style="position:absolute;left:500.60px;top:370.34px;width:33.50px;height:1px;background:#d8edc8;"></div>
<div style="position:absolute;left:534.10px;top:370.34px;width:33.20px;height:1px;background:#d8edc8;"></div>
<div style="position:absolute;left:567.30px;top:370.34px;width:57.50px;height:1px;background:#e3e3e3;"></div>
<div style="position:absolute;left:534.10px;top:382.62px;width:33.20px;height:1px;background:#d8edc8;"></div>
<div style="position:absolute;left:567.30px;top:382.62px;width:57.50px;height:1px;background:#e3e3e3;"></div>
<div style="position:absolute;left:534.10px;top:394.90px;width:33.20px;height:1px;background:#d8edc8;"></div>
<div style="position:absolute;left:567.30px;top:394.90px;width:57.50px;height:1px;background:#e3e3e3;"></div>
<div style="position:absolute;left:250.90px;top:407.18px;width:249.70px;height:1px;background:#e3e3e3;"></div>
<div style="position:absolute;left:500.60px;top:407.18px;width:33.50px;height:1px;background:#d8edc8;"></div>
<div style="position:absolute;left:534.10px;top:407.18px;width:33.20px;height:1px;background:#d8edc8;"></div>
<div style="position:absolute;left:567.30px;top:407.18px;width:57.50px;height:1px;background:#e3e3e3;"></div>
<div style="position:absolute;left:534.10px;top:419.46px;width:33.20px;height:1px;background:#d8edc8;"></div>
<div style="position:absolute;left:567.30px;top:419.46px;width:57.50px;height:1px;background:#e3e3e3;"></div>
<div style="position:absolute;left:534.10px;top:431.74px;width:33.20px;height:1px;background:#d8edc8;"></div>
<div style="position:absolute;left:567.30px;top:431.74px;width:57.50px;height:1px;background:#e3e3e3;"></div>
<div style="position:absolute;left:250.90px;top:444.02px;width:249.70px;height:1px;background:#e3e3e3;"></div>
<div style="position:absolute;left:500.60px;top:444.02px;width:33.50px;height:1px;background:#d8edc8;"></div>
<div style="position:absolute;left:534.10px;top:444.02px;width:33.20px;height:1px;background:#d8edc8;"></div>
<div style="position:absolute;left:567.30px;top:444.02px;width:57.50px;height:1px;background:#e3e3e3;"></div>
<div style="position:absolute;left:250.90px;top:456.30px;width:249.70px;height:1px;background:#e3e3e3;"></div>
<div style="position:absolute;left:500.60px;top:456.30px;width:33.50px;height:1px;background:#d8edc8;"></div>
<div style="position:absolute;left:534.10px;top:456.30px;width:33.20px;height:1px;background:#d8edc8;"></div>
<div style="position:absolute;left:567.30px;top:456.30px;width:57.50px;height:1px;background:#e3e3e3;"></div>
<div style="position:absolute;left:629.00px;top:284.38px;width:57.30px;height:1px;background:#e3e3e3;"></div>
<div style="position:absolute;left:686.30px;top:284.38px;width:66.40px;height:1px;background:#d8edc8;"></div>
<div style="position:absolute;left:752.70px;top:284.38px;width:250.00px;height:1px;background:#e3e3e3;"></div>
<div style="position:absolute;left:629.00px;top:296.66px;width:57.30px;height:1px;background:#e3e3e3;"></div>
<div style="position:absolute;left:686.30px;top:296.66px;width:66.40px;height:1px;background:#d8edc8;"></div>
<div style="position:absolute;left:752.70px;top:296.66px;width:250.00px;height:1px;background:#e3e3e3;"></div>
<div style="position:absolute;left:629.00px;top:308.94px;width:57.30px;height:1px;background:#e3e3e3;"></div>
<div style="position:absolute;left:686.30px;top:308.94px;width:66.40px;height:1px;background:#d8edc8;"></div>
<div style="position:absolute;left:752.70px;top:308.94px;width:250.00px;height:1px;background:#e3e3e3;"></div>
<div style="position:absolute;left:629.00px;top:321.22px;width:57.30px;height:1px;background:#e3e3e3;"></div>
<div style="position:absolute;left:686.30px;top:321.22px;width:66.40px;height:1px;background:#d8edc8;"></div>
<div style="position:absolute;left:752.70px;top:321.22px;width:250.00px;height:1px;background:#e3e3e3;"></div>
<div style="position:absolute;left:629.00px;top:333.50px;width:57.30px;height:1px;background:#e3e3e3;"></div>
<div style="position:absolute;left:686.30px;top:333.50px;width:66.40px;height:1px;background:#d8edc8;"></div>
<div style="position:absolute;left:752.70px;top:333.50px;width:250.00px;height:1px;background:#e3e3e3;"></div>
<div style="position:absolute;left:629.00px;top:345.78px;width:57.30px;height:1px;background:#e3e3e3;"></div>
<div style="position:absolute;left:686.30px;top:345.78px;width:33.00px;height:1px;background:#d8edc8;"></div>
<div style="position:absolute;left:629.00px;top:358.06px;width:57.30px;height:1px;background:#e3e3e3;"></div>
<div style="position:absolute;left:686.30px;top:358.06px;width:33.00px;height:1px;background:#d8edc8;"></div>
<div style="position:absolute;left:629.00px;top:370.34px;width:57.30px;height:1px;background:#e3e3e3;"></div>
<div style="position:absolute;left:686.30px;top:370.34px;width:33.00px;height:1px;background:#d8edc8;"></div>
<div style="position:absolute;left:719.30px;top:345.78px;width:283.40px;height:1px;background:#e3e3e3;"></div>
<div style="position:absolute;left:629.00px;top:382.62px;width:57.30px;height:1px;background:#e3e3e3;"></div>
<div style="position:absolute;left:686.30px;top:382.62px;width:66.40px;height:1px;background:#d8edc8;"></div>
<div style="position:absolute;left:752.70px;top:382.62px;width:250.00px;height:1px;background:#e3e3e3;"></div>
<div style="position:absolute;left:629.00px;top:394.90px;width:57.30px;height:1px;background:#e3e3e3;"></div>
<div style="position:absolute;left:686.30px;top:394.90px;width:66.40px;height:1px;background:#d8edc8;"></div>
<div style="position:absolute;left:752.70px;top:394.90px;width:250.00px;height:1px;background:#e3e3e3;"></div>
<div style="position:absolute;left:629.00px;top:407.18px;width:57.30px;height:1px;background:#e3e3e3;"></div>
<div style="position:absolute;left:686.30px;top:407.18px;width:66.40px;height:1px;background:#d8edc8;"></div>
<div style="position:absolute;left:752.70px;top:407.18px;width:250.00px;height:1px;background:#e3e3e3;"></div>
<div style="position:absolute;left:629.00px;top:419.46px;width:57.30px;height:1px;background:#e3e3e3;"></div>
<div style="position:absolute;left:686.30px;top:419.46px;width:66.40px;height:1px;background:#d8edc8;"></div>
<div style="position:absolute;left:752.70px;top:419.46px;width:250.00px;height:1px;background:#e3e3e3;"></div>
<div style="position:absolute;left:657.20px;top:431.74px;width:29.10px;height:1px;background:#e3e3e3;"></div>
<div style="position:absolute;left:629.00px;top:444.02px;width:57.30px;height:1px;background:#e3e3e3;"></div>
<div style="position:absolute;left:686.30px;top:444.02px;width:66.40px;height:1px;background:#d8edc8;"></div>
<div style="position:absolute;left:752.70px;top:444.02px;width:250.00px;height:1px;background:#e3e3e3;"></div>
<div style="position:absolute;left:629.00px;top:456.30px;width:57.30px;height:1px;background:#e3e3e3;"></div>
<div style="position:absolute;left:686.30px;top:456.30px;width:66.40px;height:1px;background:#d8edc8;"></div>
<div style="position:absolute;left:752.70px;top:456.30px;width:250.00px;height:1px;background:#e3e3e3;"></div>
<div style="position:absolute;left:235.20px;top:272.60px;width:1px;height:190.40px;background:#d0d0d0;"></div>
<div style="position:absolute;left:250.40px;top:272.60px;width:1px;height:190.40px;background:#e0eef2;"></div>
<div style="position:absolute;left:500.10px;top:272.60px;width:1px;height:190.40px;background:#d8edc8;"></div>
<div style="position:absolute;left:533.60px;top:272.60px;width:1px;height:190.40px;background:#d8edc8;"></div>
<div style="position:absolute;left:566.80px;top:272.60px;width:1px;height:190.40px;background:#d8edc8;"></div>
<div style="position:absolute;left:596.00px;top:272.60px;width:1px;height:190.40px;background:#e3e3e3;"></div>
<div style="position:absolute;left:656.70px;top:272.60px;width:1px;height:190.40px;background:#e3e3e3;"></div>
<div style="position:absolute;left:685.80px;top:272.60px;width:1px;height:190.40px;background:#d8edc8;"></div>
<div style="position:absolute;left:718.80px;top:272.60px;width:1px;height:190.40px;background:#d8edc8;"></div>
<div style="position:absolute;left:752.20px;top:272.60px;width:1px;height:190.40px;background:#d8edc8;"></div>
<div style="position:absolute;left:1002.20px;top:272.60px;width:1px;height:190.40px;background:#e0eef2;"></div>
<div style="position:absolute;left:1017.90px;top:272.60px;width:1px;height:190.40px;background:#d0d0d0;"></div>
<div style="position:absolute;left:624.80px;top:247.30px;width:4.20px;height:215.70px;background:#c2c2c2;"></div>
<div style="position:absolute;left:626.00px;top:247.30px;width:1.80px;height:215.70px;background:#b3b3b3;"></div>
<div style="position:absolute;left:205px;top:463px;width:850px;height:22px;background:#fff;"></div>
<div style="position:absolute;left:78px;top:463px;width:965px;height:2.8px;background:#e3e3e3;"></div>
<svg style="position:absolute;left:0;top:0" width="1055" height="485" viewBox="0 0 1055 485"><defs><filter id="sh" x="-20%" y="-50%" width="140%" height="200%"><feGaussianBlur in="SourceAlpha" stdDeviation="1.2"/><feOffset dx="1" dy="1.5"/><feComponentTransfer><feFuncA type="linear" slope="0.45"/></feComponentTransfer><feMerge><feMergeNode/><feMergeNode in="SourceGraphic"/></feMerge></filter></defs><path filter="url(#sh)" fill="#0bae4c" d="M9.8 64.8H67.8V61.1L78.6 67L67.8 73V69.1H9.8Z"/><path filter="url(#sh)" fill="#0bae4c" d="M32.9 109.8H91.1V106.1L102.6 112L91.1 117.9V113.9H32.9Z"/><rect x="248.4" y="278.4" width="59.1" height="26.9" rx="1.5" fill="none" stroke="#0bae4c" stroke-width="2.8"/></svg>
</div></body></html>
